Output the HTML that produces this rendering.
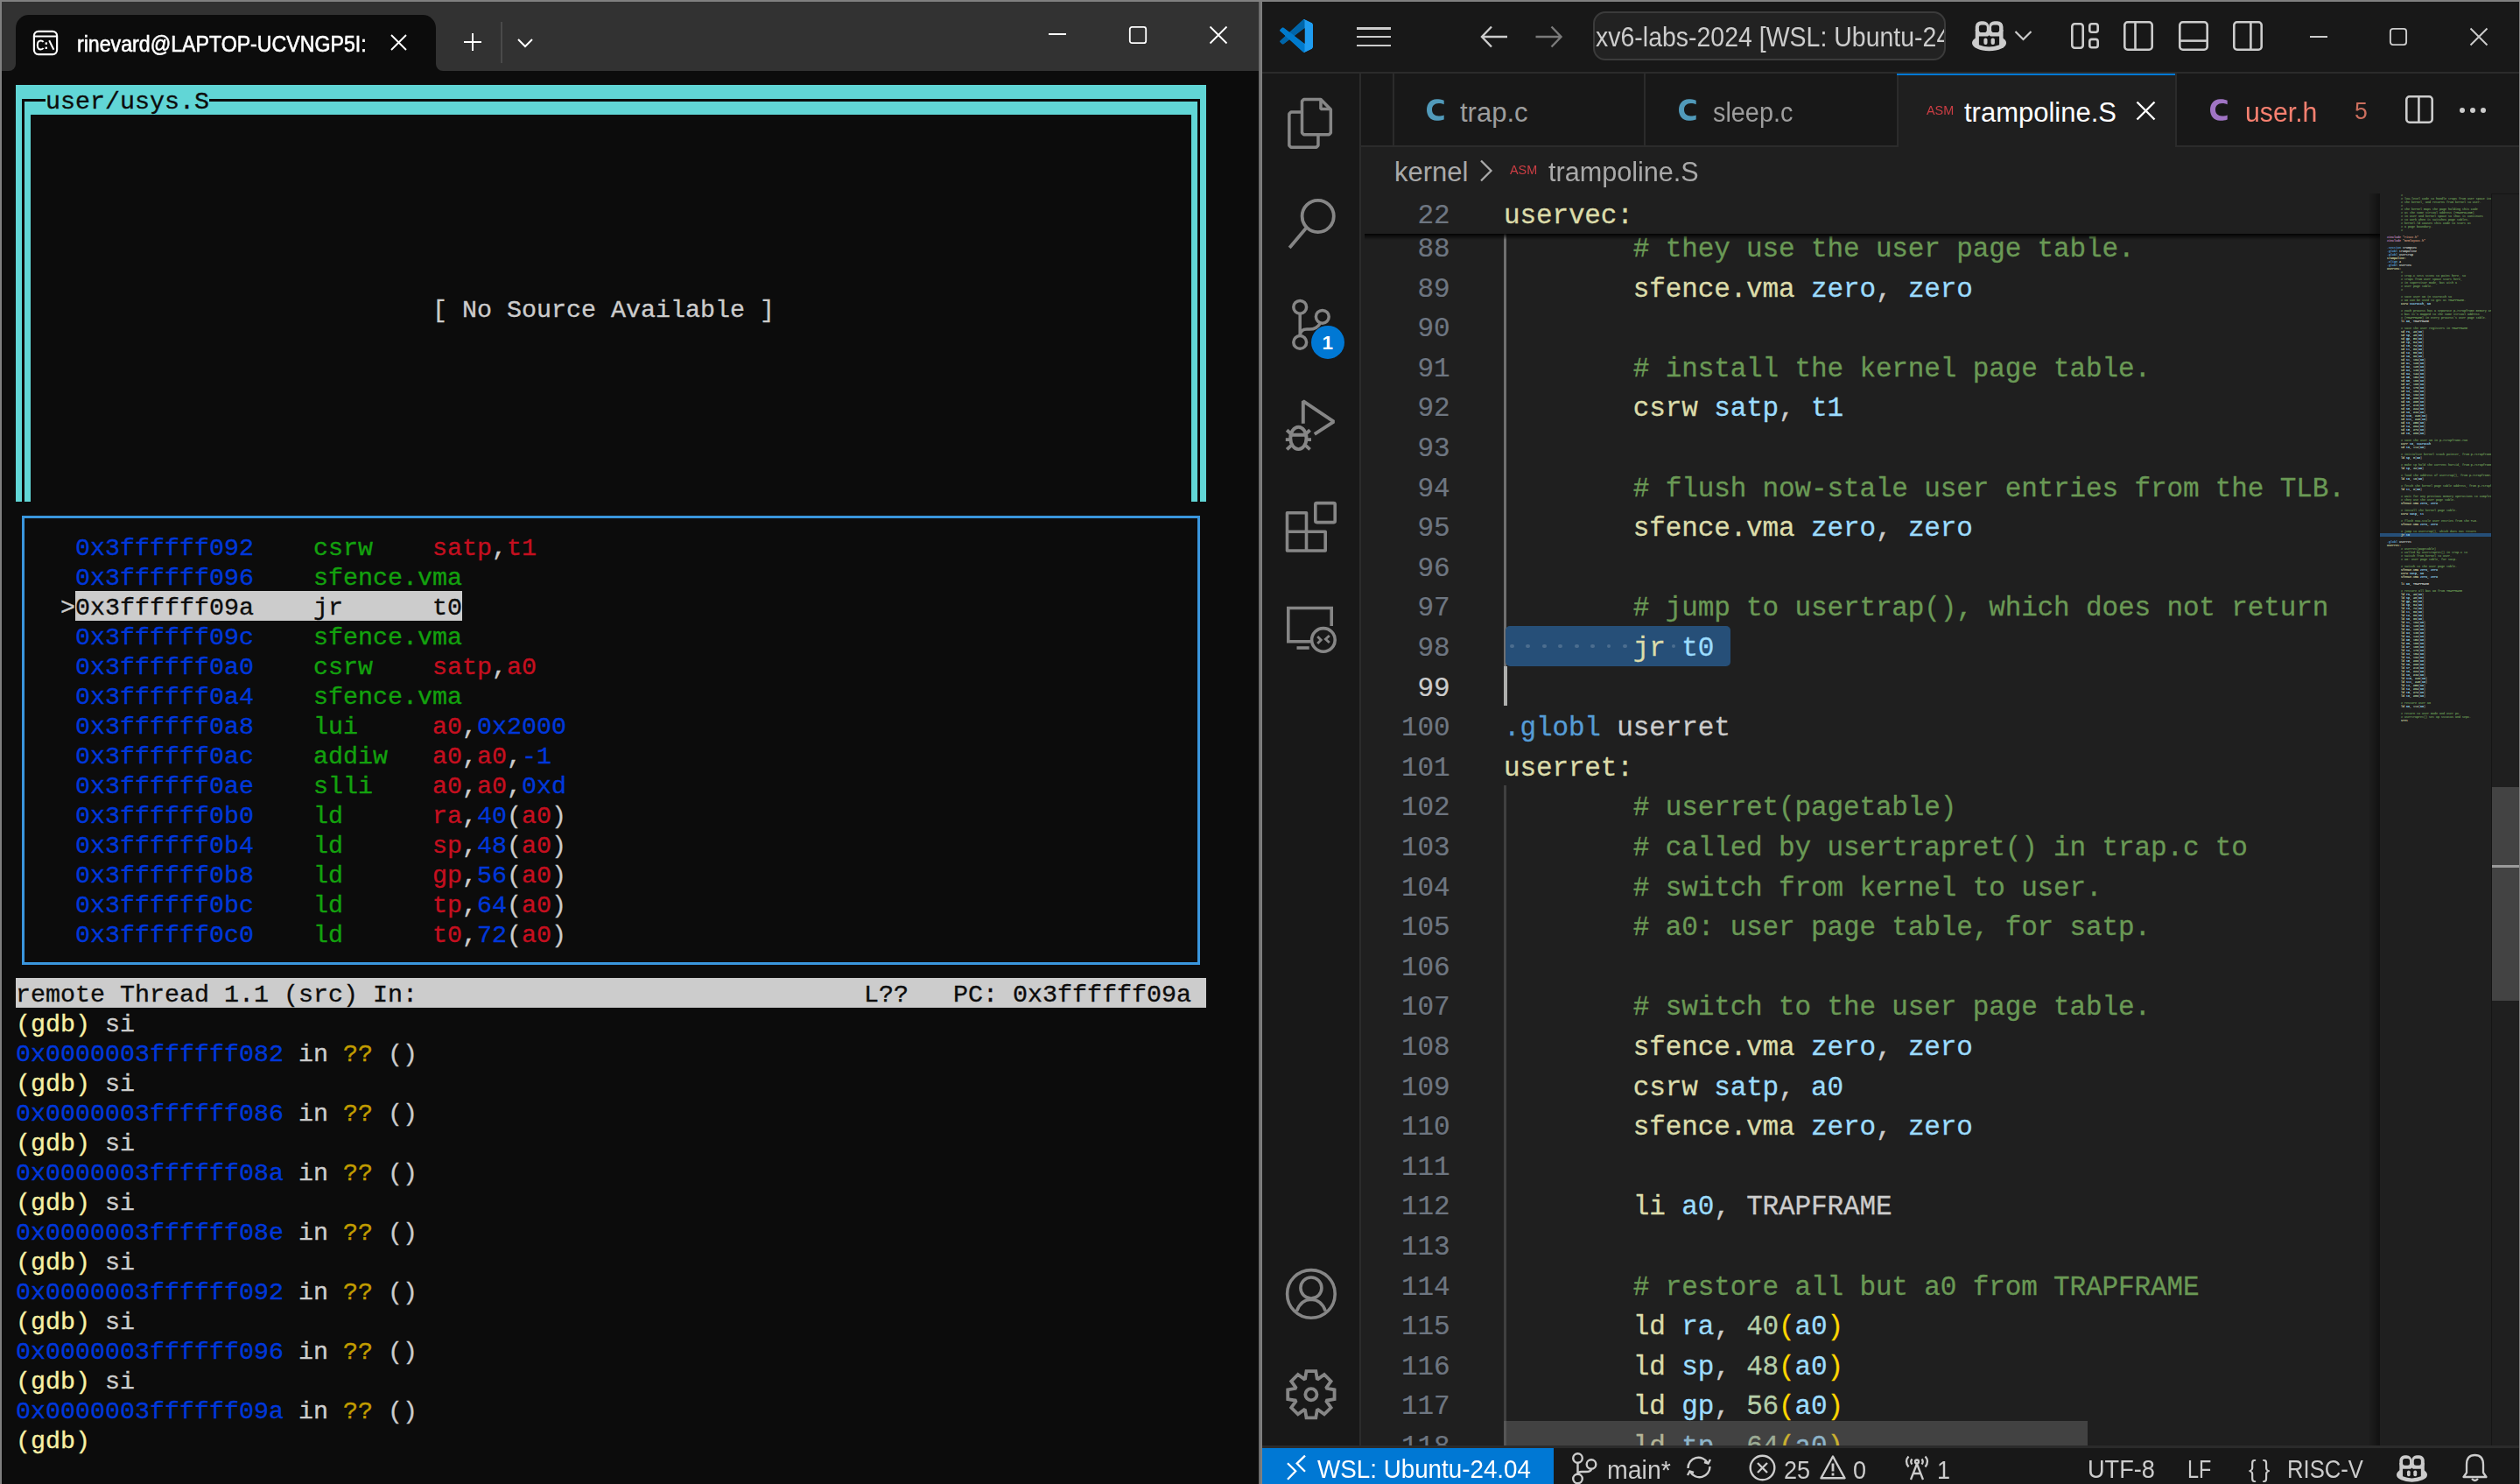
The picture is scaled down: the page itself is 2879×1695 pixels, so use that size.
<!DOCTYPE html>
<html><head><meta charset="utf-8"><title>screen</title>
<style>
html,body{margin:0;padding:0;}
body{width:2879px;height:1695px;position:relative;overflow:hidden;background:#0c0c0c;}
.t{position:absolute;left:18px;white-space:pre;font-family:"Liberation Mono",monospace;font-size:28.33px;line-height:34px;height:34px;color:#cccccc;-webkit-text-stroke:0.35px currentColor;}
.e{position:absolute;left:1718px;white-space:pre;font-family:"Liberation Mono",monospace;font-size:31px;letter-spacing:-0.13px;line-height:45.6px;height:45.6px;color:#cccccc;-webkit-text-stroke:0.3px currentColor;}
.ln{position:absolute;left:1561.5px;width:95px;text-align:right;white-space:pre;font-family:"Liberation Mono",monospace;font-size:31px;letter-spacing:-0.13px;line-height:45.6px;height:45.6px;color:#6e7681;-webkit-text-stroke:0.2px currentColor;}
</style></head><body>

<div style="position:absolute;left:0px;top:0px;width:2879px;height:2px;background:#808080;"></div>
<div style="position:absolute;left:0px;top:0px;width:2px;height:1695px;background:#808080;"></div>
<div style="position:absolute;left:1438px;top:0px;width:4px;height:1695px;background:#808080;"></div>
<div style="position:absolute;left:1438px;top:2px;width:2px;height:1693px;background:#6c6c6c;"></div>
<div style="position:absolute;left:2px;top:2px;width:1436px;height:79px;background:#323232;"></div>
<div style="position:absolute;left:18px;top:17px;width:480px;height:64px;background:#0c0c0c;border-radius:15px 15px 0 0;"></div>
<div style="position:absolute;left:10px;top:73px;width:8px;height:8px;background:#0c0c0c;"></div>
<div style="position:absolute;left:2px;top:2px;width:16px;height:79px;background:#323232;border-bottom-right-radius:8px;"></div>
<div style="position:absolute;left:498px;top:73px;width:8px;height:8px;background:#0c0c0c;"></div>
<div style="position:absolute;left:498px;top:2px;width:940px;height:79px;background:#323232;border-bottom-left-radius:8px;"></div>
<svg style="position:absolute;left:36px;top:33px;" width="32" height="32" viewBox="0 0 32 32"><rect x="2.9" y="2.9" width="26.2" height="26.2" rx="5" fill="none" stroke="#fff" stroke-width="2.2"/><line x1="3" y1="8.5" x2="29" y2="8.5" stroke="#fff" stroke-width="2"/><path d="M13.6 14.8 Q12.6 13.4 10.6 13.4 Q6.8 13.4 6.8 18.4 Q6.8 23.4 10.6 23.4 Q12.6 23.4 13.6 22" fill="none" stroke="#fff" stroke-width="2"/><rect x="15.6" y="15.4" width="2.4" height="2.4" fill="#fff"/><rect x="15.6" y="20.6" width="2.4" height="2.4" fill="#fff"/><path d="M20.2 13.2 L25.4 23.8" stroke="#fff" stroke-width="2" fill="none"/></svg>
<div style="position:absolute;left:88px;top:38px;white-space:pre;color:#ffffff;font-family:'Liberation Sans', sans-serif;font-size:25.4px;font-weight:normal;line-height:1;-webkit-text-stroke:0.6px #fff;transform:scaleX(0.912);transform-origin:0 0;">rinevard@LAPTOP-UCVNGP5I:</div>
<svg style="position:absolute;left:445px;top:38px;" width="22" height="22" viewBox="0 0 22 22"><path d="M2 2 L19 19 M19 2 L2 19" stroke="#fff" stroke-width="1.9" fill="none"/></svg>
<svg style="position:absolute;left:528px;top:36px;" width="24" height="24" viewBox="0 0 24 24"><path d="M12 2 V22 M2 12 H22" stroke="#fff" stroke-width="2" fill="none"/></svg>
<div style="position:absolute;left:572px;top:25px;width:2px;height:47px;background:#4a4a4a;"></div>
<svg style="position:absolute;left:590px;top:42px;" width="20" height="14" viewBox="0 0 20 14"><path d="M2 3 L10 11 L18 3" stroke="#fff" stroke-width="2" fill="none"/></svg>
<div style="position:absolute;left:1198px;top:38px;width:20px;height:2px;background:#ffffff;"></div>
<svg style="position:absolute;left:1288px;top:28px;" width="24" height="24" viewBox="0 0 24 24"><rect x="2.8" y="2.8" width="18.4" height="18.4" rx="2.5" fill="none" stroke="#fff" stroke-width="1.8"/></svg>
<svg style="position:absolute;left:1380px;top:28px;" width="24" height="24" viewBox="0 0 24 24"><path d="M2.5 2.5 L21.5 21.5 M21.5 2.5 L2.5 21.5" stroke="#fff" stroke-width="1.8" fill="none"/></svg>
<div style="position:absolute;left:18px;top:97px;width:1360px;height:34px;background:#61d6d6;"></div>
<div style="position:absolute;left:18px;top:131px;width:17px;height:442px;background:#61d6d6;"></div>
<div style="position:absolute;left:1361px;top:131px;width:17px;height:442px;background:#61d6d6;"></div>
<div style="position:absolute;left:25px;top:113px;width:1346px;height:3px;background:#0c0c0c;"></div>
<div style="position:absolute;left:25px;top:113px;width:3px;height:460px;background:#0c0c0c;"></div>
<div style="position:absolute;left:1368px;top:113px;width:3px;height:460px;background:#0c0c0c;"></div>
<div style="position:absolute;left:52px;top:97px;width:187px;height:34px;background:#61d6d6;"></div>
<div class="t" style="top:99.5px;left:52px"><span style="color:#0c0c0c">user/usys.S</span></div>
<div class="t" style="top:337.5px;left:494px">[ No Source Available ]</div>
<div style="position:absolute;left:25px;top:589px;width:1346px;height:3px;background:#3a96dd;"></div>
<div style="position:absolute;left:25px;top:1099px;width:1346px;height:3px;background:#3a96dd;"></div>
<div style="position:absolute;left:25px;top:589px;width:3px;height:513px;background:#3a96dd;"></div>
<div style="position:absolute;left:1368px;top:589px;width:3px;height:513px;background:#3a96dd;"></div>
<div class="t" style="top:609.5px;left:86px"><span style="color:#0037da">0x3ffffff092</span>    <span style="color:#13a10e">csrw    </span><span style="color:#c50f1f">satp</span><span style="color:#cccccc">,</span><span style="color:#c50f1f">t1</span></div>
<div class="t" style="top:643.5px;left:86px"><span style="color:#0037da">0x3ffffff096</span>    <span style="color:#13a10e">sfence.vma</span></div>
<div style="position:absolute;left:86px;top:675px;width:442px;height:34px;background:#cccccc;"></div>
<div class="t" style="top:677.5px;left:69px"><span style="color:#cccccc">&gt;</span><span style="color:#0c0c0c">0x3ffffff09a    jr      t0</span></div>
<div class="t" style="top:711.5px;left:86px"><span style="color:#0037da">0x3ffffff09c</span>    <span style="color:#13a10e">sfence.vma</span></div>
<div class="t" style="top:745.5px;left:86px"><span style="color:#0037da">0x3ffffff0a0</span>    <span style="color:#13a10e">csrw    </span><span style="color:#c50f1f">satp</span><span style="color:#cccccc">,</span><span style="color:#c50f1f">a0</span></div>
<div class="t" style="top:779.5px;left:86px"><span style="color:#0037da">0x3ffffff0a4</span>    <span style="color:#13a10e">sfence.vma</span></div>
<div class="t" style="top:813.5px;left:86px"><span style="color:#0037da">0x3ffffff0a8</span>    <span style="color:#13a10e">lui     </span><span style="color:#c50f1f">a0</span><span style="color:#cccccc">,</span><span style="color:#0037da">0x2000</span></div>
<div class="t" style="top:847.5px;left:86px"><span style="color:#0037da">0x3ffffff0ac</span>    <span style="color:#13a10e">addiw   </span><span style="color:#c50f1f">a0</span><span style="color:#cccccc">,</span><span style="color:#c50f1f">a0</span><span style="color:#cccccc">,</span><span style="color:#0037da">-1</span></div>
<div class="t" style="top:881.5px;left:86px"><span style="color:#0037da">0x3ffffff0ae</span>    <span style="color:#13a10e">slli    </span><span style="color:#c50f1f">a0</span><span style="color:#cccccc">,</span><span style="color:#c50f1f">a0</span><span style="color:#cccccc">,</span><span style="color:#0037da">0xd</span></div>
<div class="t" style="top:915.5px;left:86px"><span style="color:#0037da">0x3ffffff0b0</span>    <span style="color:#13a10e">ld      </span><span style="color:#c50f1f">ra</span><span style="color:#cccccc">,</span><span style="color:#0037da">40</span><span style="color:#cccccc">(</span><span style="color:#c50f1f">a0</span><span style="color:#cccccc">)</span></div>
<div class="t" style="top:949.5px;left:86px"><span style="color:#0037da">0x3ffffff0b4</span>    <span style="color:#13a10e">ld      </span><span style="color:#c50f1f">sp</span><span style="color:#cccccc">,</span><span style="color:#0037da">48</span><span style="color:#cccccc">(</span><span style="color:#c50f1f">a0</span><span style="color:#cccccc">)</span></div>
<div class="t" style="top:983.5px;left:86px"><span style="color:#0037da">0x3ffffff0b8</span>    <span style="color:#13a10e">ld      </span><span style="color:#c50f1f">gp</span><span style="color:#cccccc">,</span><span style="color:#0037da">56</span><span style="color:#cccccc">(</span><span style="color:#c50f1f">a0</span><span style="color:#cccccc">)</span></div>
<div class="t" style="top:1017.5px;left:86px"><span style="color:#0037da">0x3ffffff0bc</span>    <span style="color:#13a10e">ld      </span><span style="color:#c50f1f">tp</span><span style="color:#cccccc">,</span><span style="color:#0037da">64</span><span style="color:#cccccc">(</span><span style="color:#c50f1f">a0</span><span style="color:#cccccc">)</span></div>
<div class="t" style="top:1051.5px;left:86px"><span style="color:#0037da">0x3ffffff0c0</span>    <span style="color:#13a10e">ld      </span><span style="color:#c50f1f">t0</span><span style="color:#cccccc">,</span><span style="color:#0037da">72</span><span style="color:#cccccc">(</span><span style="color:#c50f1f">a0</span><span style="color:#cccccc">)</span></div>
<div style="position:absolute;left:18px;top:1117px;width:1360px;height:34px;background:#cccccc;"></div>
<div class="t" style="top:1119.5px;left:18px"><span style="color:#0c0c0c">remote Thread 1.1 (src) In:                              L??   PC: 0x3ffffff09a</span></div>
<div class="t" style="top:1153.5px;left:18px"><span style="color:#f9f1a5">(gdb)</span><span style="color:#cccccc"> si</span></div>
<div class="t" style="top:1187.5px;left:18px"><span style="color:#0037da">0x0000003ffffff082</span><span style="color:#cccccc"> in </span><span style="color:#c19c00">??</span><span style="color:#cccccc"> ()</span></div>
<div class="t" style="top:1221.5px;left:18px"><span style="color:#f9f1a5">(gdb)</span><span style="color:#cccccc"> si</span></div>
<div class="t" style="top:1255.5px;left:18px"><span style="color:#0037da">0x0000003ffffff086</span><span style="color:#cccccc"> in </span><span style="color:#c19c00">??</span><span style="color:#cccccc"> ()</span></div>
<div class="t" style="top:1289.5px;left:18px"><span style="color:#f9f1a5">(gdb)</span><span style="color:#cccccc"> si</span></div>
<div class="t" style="top:1323.5px;left:18px"><span style="color:#0037da">0x0000003ffffff08a</span><span style="color:#cccccc"> in </span><span style="color:#c19c00">??</span><span style="color:#cccccc"> ()</span></div>
<div class="t" style="top:1357.5px;left:18px"><span style="color:#f9f1a5">(gdb)</span><span style="color:#cccccc"> si</span></div>
<div class="t" style="top:1391.5px;left:18px"><span style="color:#0037da">0x0000003ffffff08e</span><span style="color:#cccccc"> in </span><span style="color:#c19c00">??</span><span style="color:#cccccc"> ()</span></div>
<div class="t" style="top:1425.5px;left:18px"><span style="color:#f9f1a5">(gdb)</span><span style="color:#cccccc"> si</span></div>
<div class="t" style="top:1459.5px;left:18px"><span style="color:#0037da">0x0000003ffffff092</span><span style="color:#cccccc"> in </span><span style="color:#c19c00">??</span><span style="color:#cccccc"> ()</span></div>
<div class="t" style="top:1493.5px;left:18px"><span style="color:#f9f1a5">(gdb)</span><span style="color:#cccccc"> si</span></div>
<div class="t" style="top:1527.5px;left:18px"><span style="color:#0037da">0x0000003ffffff096</span><span style="color:#cccccc"> in </span><span style="color:#c19c00">??</span><span style="color:#cccccc"> ()</span></div>
<div class="t" style="top:1561.5px;left:18px"><span style="color:#f9f1a5">(gdb)</span><span style="color:#cccccc"> si</span></div>
<div class="t" style="top:1595.5px;left:18px"><span style="color:#0037da">0x0000003ffffff09a</span><span style="color:#cccccc"> in </span><span style="color:#c19c00">??</span><span style="color:#cccccc"> ()</span></div>
<div class="t" style="top:1629.5px;left:18px"><span style="color:#f9f1a5">(gdb)</span></div>
<div style="position:absolute;left:1442px;top:2px;width:1437px;height:80px;background:#181818;"></div>
<div style="position:absolute;left:1442px;top:82px;width:1437px;height:2px;background:#2b2b2b;"></div>
<svg style="position:absolute;left:1462px;top:22px;" width="40" height="38" viewBox="0 0 40 38"><g transform="scale(0.38)"><defs><mask id="vm" maskUnits="userSpaceOnUse" x="0" y="0" width="100" height="100"><path fill="#fff" fill-rule="evenodd" d="M70.9119 99.3171C72.4869 99.9307 74.2828 99.8914 75.8725 99.1264L96.4608 89.2197C98.6242 88.1787 100 85.9892 100 83.5872V16.4133C100 14.0113 98.6243 11.8218 96.4609 10.7808L75.8725 0.873756C73.7862 -0.130129 71.3446 0.11576 69.5135 1.44695C69.252 1.63711 69.0028 1.84943 68.769 2.08341L29.3551 38.0415L12.1872 25.0096C10.589 23.7965 8.35363 23.8959 6.86933 25.2461L1.36303 30.2549C-0.452552 31.9064 -0.454633 34.7627 1.35853 36.417L16.2471 50.0001L1.35853 63.5832C-0.454633 65.2374 -0.452552 68.0938 1.36303 69.7453L6.86933 74.7541C8.35363 76.1043 10.589 76.2037 12.1872 74.9905L29.3551 61.9587L68.769 97.9167C69.3925 98.5406 70.1246 99.0104 70.9119 99.3171ZM75.0152 27.2989L45.1091 50.0001L75.0152 72.7012V27.2989Z"/></mask></defs>
<g mask="url(#vm)"><path d="M96.4614 10.7962L75.8569 0.875542C73.4719 -0.272773 70.6217 0.211611 68.75 2.08333L1.29858 63.5832C-0.515693 65.2373 -0.513607 68.0937 1.30308 69.7452L6.81272 74.754C8.29793 76.1042 10.5347 76.2036 12.1338 74.9905L93.3609 13.3699C96.086 11.3026 100 13.2462 100 16.6667V16.4275C100 14.0265 98.6246 11.8378 96.4614 10.7962Z" fill="#0065A9"/><path d="M96.4614 89.2038L75.8569 99.1245C73.4719 100.273 70.6217 99.7884 68.75 97.9167L1.29858 36.4169C-0.515693 34.7627 -0.513607 31.9063 1.30308 30.2548L6.81272 25.246C8.29793 23.8958 10.5347 23.7964 12.1338 25.0095L93.3609 86.6301C96.086 88.6974 100 86.7538 100 83.3334V83.5726C100 85.9735 98.6246 88.1622 96.4614 89.2038Z" fill="#007ACC"/><path d="M75.8578 99.1263C73.4721 100.274 70.6219 99.7885 68.75 97.9166C71.0564 100.223 75 98.5895 75 95.3278V4.67213C75 1.41039 71.0564 -0.223106 68.75 2.08329C70.6219 0.211402 73.4721 -0.273666 75.8578 0.873633L96.4587 10.7807C98.6234 11.8217 100 14.0112 100 16.4132V83.5871C100 85.9891 98.6234 88.1786 96.4586 89.2196L75.8578 99.1263Z" fill="#1F9CF0"/></g></g></svg>
<div style="position:absolute;left:1550px;top:31.2px;width:39px;height:2.5px;background:#cccccc;"></div>
<div style="position:absolute;left:1550px;top:40.8px;width:39px;height:2.5px;background:#cccccc;"></div>
<div style="position:absolute;left:1550px;top:50.5px;width:39px;height:2.5px;background:#cccccc;"></div>
<svg style="position:absolute;left:1688px;top:26px;" width="40" height="32" viewBox="0 0 40 32"><path d="M5 16 H34 M16 4.5 L5 16 L16 27.5" stroke="#cccccc" stroke-width="2.4" fill="none" stroke-linejoin="miter"/></svg>
<svg style="position:absolute;left:1750px;top:26px;" width="40" height="32" viewBox="0 0 40 32"><path d="M4.5 16 H33.5 M22.5 4.5 L33.5 16 L22.5 27.5" stroke="#7a7a7a" stroke-width="2.4" fill="none"/></svg>
<div style="position:absolute;left:1820px;top:13px;width:403px;height:56px;background:#222222;box-sizing:border-box;border:2px solid #3b3b3b;border-radius:14px;"></div>
<div style="position:absolute;left:1822px;top:15px;width:399px;height:52px;overflow:hidden;border-radius:12px;">
<div style="position:absolute;left:1px;top:10.91px;white-space:pre;color:#cccccc;font-family:'Liberation Sans', sans-serif;font-size:32px;line-height:32px;transform:scaleX(0.89);transform-origin:0 0;">xv6-labs-2024 [WSL: Ubuntu-24.04]</div>
</div>
<svg style="position:absolute;left:2253px;top:23.75px;" width="42" height="38" viewBox="0 0 42 38"><g transform="scale(1.0)">
<ellipse cx="19.55" cy="25" rx="19.55" ry="9.3" fill="#cccccc"/>
<rect x="3.75" y="10" width="31.75" height="15" fill="#cccccc"/>
<rect x="3.75" y="0.2" width="15.6" height="16.8" rx="6.5" fill="#cccccc"/>
<rect x="19.1" y="0.2" width="16.4" height="16.8" rx="6.5" fill="#cccccc"/>
<rect x="7.9" y="4.5" width="8.9" height="8.5" rx="2.8" fill="#181818"/>
<rect x="22.1" y="4.5" width="9" height="8.5" rx="2.8" fill="#181818"/>
<path d="M7.9 17.5 H18 L19.5 16.2 L21 17.5 H31.1 V27.2 Q19.5 32 7.9 27.2 Z" fill="#181818"/>
<rect x="13.4" y="19.5" width="4.1" height="7.5" rx="2" fill="#cccccc"/>
<rect x="21.6" y="19.5" width="4.3" height="7.5" rx="2" fill="#cccccc"/>
</g></svg>
<svg style="position:absolute;left:2300px;top:34px;" width="24" height="14" viewBox="0 0 24 14"><path d="M2.5 2 L11.5 11 L20.5 2" stroke="#cccccc" stroke-width="2.2" fill="none"/></svg>
<svg style="position:absolute;left:2362px;top:22px;" width="40" height="38" viewBox="0 0 40 38"><rect x="5.3" y="5.3" width="12.4" height="27.4" rx="3" fill="none" stroke="#cccccc" stroke-width="2.6"/><rect x="25.3" y="5.3" width="9.4" height="9.4" rx="2.5" fill="none" stroke="#cccccc" stroke-width="2.6"/><rect x="25.3" y="22.9" width="9.4" height="9.4" rx="2.5" fill="none" stroke="#cccccc" stroke-width="2.6"/></svg>
<svg style="position:absolute;left:2422px;top:20px;" width="42" height="42" viewBox="0 0 42 42"><rect x="5.3" y="5.3" width="31.4" height="31.4" rx="3.5" fill="none" stroke="#cccccc" stroke-width="2.6"/><line x1="17.5" y1="5" x2="17.5" y2="37" stroke="#cccccc" stroke-width="2.6"/></svg>
<svg style="position:absolute;left:2485px;top:20px;" width="42" height="42" viewBox="0 0 42 42"><rect x="5.3" y="5.3" width="31.4" height="31.4" rx="3.5" fill="none" stroke="#cccccc" stroke-width="2.6"/><line x1="5" y1="26.6" x2="37" y2="26.6" stroke="#cccccc" stroke-width="2.6"/></svg>
<svg style="position:absolute;left:2547px;top:20px;" width="42" height="42" viewBox="0 0 42 42"><rect x="5.3" y="5.3" width="31.4" height="31.4" rx="3.5" fill="none" stroke="#cccccc" stroke-width="2.6"/><line x1="24.4" y1="5" x2="24.4" y2="37" stroke="#cccccc" stroke-width="2.6"/></svg>
<div style="position:absolute;left:2639px;top:41px;width:20px;height:2px;background:#cccccc;"></div>
<svg style="position:absolute;left:2727px;top:29px;" width="26" height="26" viewBox="0 0 26 26"><rect x="3.9" y="3.9" width="18.2" height="18.2" rx="3" fill="none" stroke="#cccccc" stroke-width="1.9"/></svg>
<svg style="position:absolute;left:2819px;top:29px;" width="26" height="26" viewBox="0 0 26 26"><path d="M3.5 3.5 L22.5 22.5 M22.5 3.5 L3.5 22.5" stroke="#cccccc" stroke-width="1.9" fill="none"/></svg>
<div style="position:absolute;left:1442px;top:84px;width:111px;height:1567px;background:#181818;"></div>
<div style="position:absolute;left:1553px;top:84px;width:2px;height:1567px;background:#2b2b2b;"></div>
<svg style="position:absolute;left:1466px;top:107px;" width="62" height="68" viewBox="0 0 62 68"><g fill="none" stroke="#868686" stroke-width="3.5" stroke-linejoin="bevel">
<path d="M23.5 6.55 H42.95 L54.35 17.95 V44.75 L52.35 46.75 H23.5 L21.5 44.75 V8.55 Z"/>
<path d="M42.95 6.8 V17.45 H54.1"/>
<path d="M21.5 20.95 H8.85 L6.85 22.95 V59.15 L8.85 61.15 H37.95 L39.95 59.15 V46.75"/>
</g></svg>
<svg style="position:absolute;left:1462px;top:220px;" width="70" height="70" viewBox="0 0 70 70"><circle cx="43.7" cy="26.95" r="18.1" fill="none" stroke="#868686" stroke-width="3.8"/><path d="M30.2 40.6 L11.2 63" stroke="#868686" stroke-width="3.8"/></svg>
<svg style="position:absolute;left:1462px;top:330px;" width="70" height="80" viewBox="0 0 70 80"><g fill="none" stroke="#868686" stroke-width="3.5">
<circle cx="23.2" cy="20.8" r="7.4"/><circle cx="48.8" cy="31.8" r="7.4"/><circle cx="23.2" cy="60.9" r="7.4"/>
<path d="M23.2 28.2 V53.5"/><path d="M46.5 38.8 Q42.5 46.1 34 46.1 H31 Q24 46.1 23.2 53"/></g></svg>
<svg style="position:absolute;left:1496px;top:370px;" width="42" height="42" viewBox="0 0 42 42"><circle cx="21" cy="20.9" r="19" fill="#0078d4"/></svg>
<div style="position:absolute;left:1510.5px;top:380.95px;white-space:pre;color:#ffffff;font-family:'Liberation Sans', sans-serif;font-size:22.5px;font-weight:bold;line-height:22.5px;">1</div>
<svg style="position:absolute;left:1462px;top:445px;" width="70" height="80" viewBox="0 0 70 80"><g fill="none" stroke="#868686" stroke-width="3.9" stroke-linejoin="miter">
<path d="M26.8 38.8 V13.2 L61.8 36.7 L39.8 50.8" stroke-linejoin="bevel"/>
<ellipse cx="21.4" cy="55.4" rx="9.1" ry="12.7"/>
<path d="M12.3 51.8 H30.5 M8.2 46.2 L13.4 51 M34.6 46.2 L29.4 51 M6.8 57.1 H12.5 M36 57.1 H30.3 M8.2 68.4 L13.6 63.4 M34.6 68.4 L29.2 63.4"/>
</g></svg>
<svg style="position:absolute;left:1462px;top:565px;" width="70" height="70" viewBox="0 0 70 70"><g fill="none" stroke="#868686" stroke-width="3.6" stroke-linejoin="round">
<path d="M8.5 20.8 H30.5 V42.2 H52.2 V64 H8.5 Z"/>
<path d="M30.5 42.2 V64 M8.5 42.2 H30.5"/>
<rect x="40.8" y="9.6" width="22.4" height="22" rx="1.5"/>
</g></svg>
<svg style="position:absolute;left:1462px;top:685px;" width="70" height="70" viewBox="0 0 70 70"><g fill="none" stroke="#868686" stroke-width="3.6">
<path d="M59.2 30 V9.5 H9.8 V47.7 H35"/>
<path d="M19.5 55 H33.7"/>
<circle cx="49.9" cy="45.9" r="13.3"/>
<path d="M43.2 42 L47.2 46 L43.2 50 M56.8 41 L52.4 45 L56.8 49" stroke-width="2.8"/>
</g></svg>
<svg style="position:absolute;left:1462px;top:1442px;" width="72" height="72" viewBox="0 0 72 72"><g fill="none" stroke="#868686" stroke-width="3.6">
<circle cx="35.9" cy="35.9" r="27.3"/>
<circle cx="35.9" cy="29" r="12"/>
<path d="M19.5 55.5 Q24 42.5 35.9 42.2 Q47.8 42.5 52.3 55.5"/>
</g></svg>
<svg style="position:absolute;left:1462px;top:1557px;" width="72" height="72" viewBox="0 0 72 72"><path d="M29.10 17.64 L30.50 9.04 L41.30 9.04 L42.70 17.64 L43.86 18.12 L50.93 13.03 L58.57 20.67 L53.48 27.74 L53.96 28.90 L62.56 30.30 L62.56 41.10 L53.96 42.50 L53.48 43.66 L58.57 50.73 L50.93 58.37 L43.86 53.28 L42.70 53.76 L41.30 62.36 L30.50 62.36 L29.10 53.76 L27.94 53.28 L20.87 58.37 L13.23 50.73 L18.32 43.66 L17.84 42.50 L9.24 41.10 L9.24 30.30 L17.84 28.90 L18.32 27.74 L13.23 20.67 L20.87 13.03 L27.94 18.12 Z" fill="none" stroke="#868686" stroke-width="3.8" stroke-linejoin="miter"/><circle cx="35.9" cy="35.7" r="6.6" fill="none" stroke="#868686" stroke-width="3.8"/></svg>
<div style="position:absolute;left:1555px;top:84px;width:1324px;height:84px;background:#181818;"></div>
<div style="position:absolute;left:1555px;top:166px;width:1324px;height:2px;background:#2b2b2b;"></div>
<div style="position:absolute;left:1591px;top:84px;width:2px;height:82px;background:#2b2b2b;"></div>
<div style="position:absolute;left:1878px;top:84px;width:2px;height:82px;background:#2b2b2b;"></div>
<div style="position:absolute;left:2167px;top:84px;width:2px;height:82px;background:#2b2b2b;"></div>
<div style="position:absolute;left:2485px;top:84px;width:2px;height:82px;background:#2b2b2b;"></div>
<div style="position:absolute;left:2169px;top:84px;width:316px;height:84px;background:#1f1f1f;"></div>
<div style="position:absolute;left:2167px;top:84px;width:318px;height:2px;background:#0078d4;"></div>
<svg style="position:absolute;left:1626px;top:109px;" width="28" height="32" viewBox="0 0 28 32"><g transform="translate(-1626,-109)"><path d="M1649.7 114.7 C1647 113.5 1644 113.3 1641 113.3 C1634.5 113.3 1630 118.5 1630 125.5 C1630 132.5 1634.5 137.8 1641 137.8 C1644.5 137.8 1647.5 137.2 1649.7 136.4 V131.4 C1648 132.2 1646 132.5 1643.5 132.5 C1639 132.5 1636 129.5 1636 125.3 C1636 121 1639 118 1643.5 118 C1646 118 1648 118.5 1649.7 119.2 Z" fill="#519aba"/></g></svg>
<div style="position:absolute;left:1668px;top:112.76px;white-space:pre;color:#9d9d9d;font-family:'Liberation Sans', sans-serif;font-size:31px;font-weight:normal;line-height:31px;">trap.c</div>
<svg style="position:absolute;left:1914px;top:109px;" width="28" height="32" viewBox="0 0 28 32"><g transform="translate(-1626,-109)"><path d="M1649.7 114.7 C1647 113.5 1644 113.3 1641 113.3 C1634.5 113.3 1630 118.5 1630 125.5 C1630 132.5 1634.5 137.8 1641 137.8 C1644.5 137.8 1647.5 137.2 1649.7 136.4 V131.4 C1648 132.2 1646 132.5 1643.5 132.5 C1639 132.5 1636 129.5 1636 125.3 C1636 121 1639 118 1643.5 118 C1646 118 1648 118.5 1649.7 119.2 Z" fill="#519aba"/></g></svg>
<div style="position:absolute;left:1957px;top:112.76px;white-space:pre;color:#9d9d9d;font-family:'Liberation Sans', sans-serif;font-size:31px;font-weight:normal;line-height:31px;transform:scaleX(0.93);transform-origin:0 0;">sleep.c</div>
<div style="position:absolute;left:2201px;top:118.38px;white-space:pre;color:#cc3e44;font-family:'Liberation Sans', sans-serif;font-size:15.5px;font-weight:normal;line-height:15.5px;transform:scaleX(0.93);transform-origin:0 0;">ASM</div>
<div style="position:absolute;left:2244px;top:112.76px;white-space:pre;color:#ffffff;font-family:'Liberation Sans', sans-serif;font-size:31px;font-weight:normal;line-height:31px;">trampoline.S</div>
<svg style="position:absolute;left:2438px;top:113px;" width="28" height="28" viewBox="0 0 28 28"><path d="M3.5 3.5 L23.5 23.5 M23.5 3.5 L3.5 23.5" stroke="#ffffff" stroke-width="2.4" fill="none"/></svg>
<svg style="position:absolute;left:2521px;top:109px;" width="28" height="32" viewBox="0 0 28 32"><g transform="translate(-1626,-109)"><path d="M1649.7 114.7 C1647 113.5 1644 113.3 1641 113.3 C1634.5 113.3 1630 118.5 1630 125.5 C1630 132.5 1634.5 137.8 1641 137.8 C1644.5 137.8 1647.5 137.2 1649.7 136.4 V131.4 C1648 132.2 1646 132.5 1643.5 132.5 C1639 132.5 1636 129.5 1636 125.3 C1636 121 1639 118 1643.5 118 C1646 118 1648 118.5 1649.7 119.2 Z" fill="#a074c4"/></g></svg>
<div style="position:absolute;left:2565px;top:112.76px;white-space:pre;color:#f88070;font-family:'Liberation Sans', sans-serif;font-size:31px;font-weight:normal;line-height:31px;transform:scaleX(0.975);transform-origin:0 0;">user.h</div>
<div style="position:absolute;left:2690px;top:113.30px;white-space:pre;color:#cc6f5e;font-family:'Liberation Sans', sans-serif;font-size:28px;font-weight:normal;line-height:28px;transform:scaleX(0.95);transform-origin:0 0;">5</div>
<svg style="position:absolute;left:2744px;top:105px;" width="40" height="40" viewBox="0 0 40 40"><rect x="5.3" y="5.3" width="29.4" height="29.4" rx="3.5" fill="none" stroke="#cccccc" stroke-width="2.6"/><line x1="19.4" y1="5" x2="19.4" y2="35" stroke="#cccccc" stroke-width="2.6"/></svg>
<div style="position:absolute;left:2809.8px;top:122.8px;width:6.4px;height:6.4px;background:#cccccc;border-radius:50%;"></div>
<div style="position:absolute;left:2821.6000000000004px;top:122.8px;width:6.4px;height:6.4px;background:#cccccc;border-radius:50%;"></div>
<div style="position:absolute;left:2833.5px;top:122.8px;width:6.4px;height:6.4px;background:#cccccc;border-radius:50%;"></div>
<div style="position:absolute;left:1555px;top:168px;width:1324px;height:53px;background:#1f1f1f;"></div>
<div style="position:absolute;left:1593px;top:180.76px;white-space:pre;color:#a9a9a9;font-family:'Liberation Sans', sans-serif;font-size:31px;font-weight:normal;line-height:31px;">kernel</div>
<svg style="position:absolute;left:1688px;top:180px;" width="20" height="30" viewBox="0 0 20 30"><path d="M4 3.5 L15.5 15 L4 26.5" stroke="#a9a9a9" stroke-width="2.3" fill="none"/></svg>
<div style="position:absolute;left:1725px;top:185.88px;white-space:pre;color:#cc3e44;font-family:'Liberation Sans', sans-serif;font-size:15.5px;font-weight:normal;line-height:15.5px;transform:scaleX(0.93);transform-origin:0 0;">ASM</div>
<div style="position:absolute;left:1769px;top:180.76px;white-space:pre;color:#a9a9a9;font-family:'Liberation Sans', sans-serif;font-size:31px;font-weight:normal;line-height:31px;transform:scaleX(0.987);transform-origin:0 0;">trampoline.S</div>
<div style="position:absolute;left:1555px;top:221px;width:1324px;height:1430px;background:#1f1f1f;"></div>
<div style="position:absolute;left:1718px;top:259.0px;width:2.6px;height:547.2px;background:#707070;"></div>
<div style="position:absolute;left:1718px;top:897.4px;width:2.6px;height:753.6px;background:#404040;"></div>
<div style="position:absolute;left:1719.6px;top:715.0px;width:257.20000000000005px;height:45.6px;background:#264f78;border-radius:5px;"></div>
<div style="position:absolute;left:1724.8349999999998px;top:735.5px;width:4.8px;height:4.8px;background:#4c6d8f;border-radius:50%;"></div>
<div style="position:absolute;left:1743.3049999999998px;top:735.5px;width:4.8px;height:4.8px;background:#4c6d8f;border-radius:50%;"></div>
<div style="position:absolute;left:1761.7749999999999px;top:735.5px;width:4.8px;height:4.8px;background:#4c6d8f;border-radius:50%;"></div>
<div style="position:absolute;left:1780.245px;top:735.5px;width:4.8px;height:4.8px;background:#4c6d8f;border-radius:50%;"></div>
<div style="position:absolute;left:1798.715px;top:735.5px;width:4.8px;height:4.8px;background:#4c6d8f;border-radius:50%;"></div>
<div style="position:absolute;left:1817.185px;top:735.5px;width:4.8px;height:4.8px;background:#4c6d8f;border-radius:50%;"></div>
<div style="position:absolute;left:1835.655px;top:735.5px;width:4.8px;height:4.8px;background:#4c6d8f;border-radius:50%;"></div>
<div style="position:absolute;left:1854.125px;top:735.5px;width:4.8px;height:4.8px;background:#4c6d8f;border-radius:50%;"></div>
<div style="position:absolute;left:1909.5349999999999px;top:735.5px;width:4.8px;height:4.8px;background:#4c6d8f;border-radius:50%;"></div>
<div class="ln" style="top:262.00px;color:#6e7681">88</div>
<div class="e" style="top:262.00px"><span style="color:#cccccc">        </span><span style="color:#6a9955"># they use the user page table.</span></div>
<div class="ln" style="top:307.60px;color:#6e7681">89</div>
<div class="e" style="top:307.60px"><span style="color:#cccccc">        </span><span style="color:#dcdcaa">sfence.vma</span><span style="color:#cccccc"> </span><span style="color:#9cdcfe">zero</span><span style="color:#cccccc">, </span><span style="color:#9cdcfe">zero</span></div>
<div class="ln" style="top:353.20px;color:#6e7681">90</div>
<div class="ln" style="top:398.80px;color:#6e7681">91</div>
<div class="e" style="top:398.80px"><span style="color:#cccccc">        </span><span style="color:#6a9955"># install the kernel page table.</span></div>
<div class="ln" style="top:444.40px;color:#6e7681">92</div>
<div class="e" style="top:444.40px"><span style="color:#cccccc">        </span><span style="color:#dcdcaa">csrw</span><span style="color:#cccccc"> </span><span style="color:#9cdcfe">satp</span><span style="color:#cccccc">, </span><span style="color:#9cdcfe">t1</span></div>
<div class="ln" style="top:490.00px;color:#6e7681">93</div>
<div class="ln" style="top:535.60px;color:#6e7681">94</div>
<div class="e" style="top:535.60px"><span style="color:#cccccc">        </span><span style="color:#6a9955"># flush now-stale user entries from the TLB.</span></div>
<div class="ln" style="top:581.20px;color:#6e7681">95</div>
<div class="e" style="top:581.20px"><span style="color:#cccccc">        </span><span style="color:#dcdcaa">sfence.vma</span><span style="color:#cccccc"> </span><span style="color:#9cdcfe">zero</span><span style="color:#cccccc">, </span><span style="color:#9cdcfe">zero</span></div>
<div class="ln" style="top:626.80px;color:#6e7681">96</div>
<div class="ln" style="top:672.40px;color:#6e7681">97</div>
<div class="e" style="top:672.40px"><span style="color:#cccccc">        </span><span style="color:#6a9955"># jump to usertrap(), which does not return</span></div>
<div class="ln" style="top:718.00px;color:#6e7681">98</div>
<div class="ln" style="top:763.60px;color:#cccccc">99</div>
<div class="ln" style="top:809.20px;color:#6e7681">100</div>
<div class="e" style="top:809.20px"><span style="color:#569cd6">.globl</span><span style="color:#cccccc"> userret</span></div>
<div class="ln" style="top:854.80px;color:#6e7681">101</div>
<div class="e" style="top:854.80px"><span style="color:#dcdcaa">userret:</span></div>
<div class="ln" style="top:900.40px;color:#6e7681">102</div>
<div class="e" style="top:900.40px"><span style="color:#cccccc">        </span><span style="color:#6a9955"># userret(pagetable)</span></div>
<div class="ln" style="top:946.00px;color:#6e7681">103</div>
<div class="e" style="top:946.00px"><span style="color:#cccccc">        </span><span style="color:#6a9955"># called by usertrapret() in trap.c to</span></div>
<div class="ln" style="top:991.60px;color:#6e7681">104</div>
<div class="e" style="top:991.60px"><span style="color:#cccccc">        </span><span style="color:#6a9955"># switch from kernel to user.</span></div>
<div class="ln" style="top:1037.20px;color:#6e7681">105</div>
<div class="e" style="top:1037.20px"><span style="color:#cccccc">        </span><span style="color:#6a9955"># a0: user page table, for satp.</span></div>
<div class="ln" style="top:1082.80px;color:#6e7681">106</div>
<div class="ln" style="top:1128.40px;color:#6e7681">107</div>
<div class="e" style="top:1128.40px"><span style="color:#cccccc">        </span><span style="color:#6a9955"># switch to the user page table.</span></div>
<div class="ln" style="top:1174.00px;color:#6e7681">108</div>
<div class="e" style="top:1174.00px"><span style="color:#cccccc">        </span><span style="color:#dcdcaa">sfence.vma</span><span style="color:#cccccc"> </span><span style="color:#9cdcfe">zero</span><span style="color:#cccccc">, </span><span style="color:#9cdcfe">zero</span></div>
<div class="ln" style="top:1219.60px;color:#6e7681">109</div>
<div class="e" style="top:1219.60px"><span style="color:#cccccc">        </span><span style="color:#dcdcaa">csrw</span><span style="color:#cccccc"> </span><span style="color:#9cdcfe">satp</span><span style="color:#cccccc">, </span><span style="color:#9cdcfe">a0</span></div>
<div class="ln" style="top:1265.20px;color:#6e7681">110</div>
<div class="e" style="top:1265.20px"><span style="color:#cccccc">        </span><span style="color:#dcdcaa">sfence.vma</span><span style="color:#cccccc"> </span><span style="color:#9cdcfe">zero</span><span style="color:#cccccc">, </span><span style="color:#9cdcfe">zero</span></div>
<div class="ln" style="top:1310.80px;color:#6e7681">111</div>
<div class="ln" style="top:1356.40px;color:#6e7681">112</div>
<div class="e" style="top:1356.40px"><span style="color:#cccccc">        </span><span style="color:#dcdcaa">li</span><span style="color:#cccccc"> </span><span style="color:#9cdcfe">a0</span><span style="color:#cccccc">, </span><span style="color:#cccccc">TRAPFRAME</span></div>
<div class="ln" style="top:1402.00px;color:#6e7681">113</div>
<div class="ln" style="top:1447.60px;color:#6e7681">114</div>
<div class="e" style="top:1447.60px"><span style="color:#cccccc">        </span><span style="color:#6a9955"># restore all but a0 from TRAPFRAME</span></div>
<div class="ln" style="top:1493.20px;color:#6e7681">115</div>
<div class="e" style="top:1493.20px"><span style="color:#cccccc">        </span><span style="color:#dcdcaa">ld</span><span style="color:#cccccc"> </span><span style="color:#9cdcfe">ra</span><span style="color:#cccccc">, </span><span style="color:#b5cea8">40</span><span style="color:#ffd700">(</span><span style="color:#9cdcfe">a0</span><span style="color:#ffd700">)</span></div>
<div class="ln" style="top:1538.80px;color:#6e7681">116</div>
<div class="e" style="top:1538.80px"><span style="color:#cccccc">        </span><span style="color:#dcdcaa">ld</span><span style="color:#cccccc"> </span><span style="color:#9cdcfe">sp</span><span style="color:#cccccc">, </span><span style="color:#b5cea8">48</span><span style="color:#ffd700">(</span><span style="color:#9cdcfe">a0</span><span style="color:#ffd700">)</span></div>
<div class="ln" style="top:1584.40px;color:#6e7681">117</div>
<div class="e" style="top:1584.40px"><span style="color:#cccccc">        </span><span style="color:#dcdcaa">ld</span><span style="color:#cccccc"> </span><span style="color:#9cdcfe">gp</span><span style="color:#cccccc">, </span><span style="color:#b5cea8">56</span><span style="color:#ffd700">(</span><span style="color:#9cdcfe">a0</span><span style="color:#ffd700">)</span></div>
<div class="ln" style="top:1630.00px;color:#6e7681">118</div>
<div class="e" style="top:1630.00px"><span style="color:#cccccc">        </span><span style="color:#dcdcaa">ld</span><span style="color:#cccccc"> </span><span style="color:#9cdcfe">tp</span><span style="color:#cccccc">, </span><span style="color:#b5cea8">64</span><span style="color:#ffd700">(</span><span style="color:#9cdcfe">a0</span><span style="color:#ffd700">)</span></div>
<div class="e" style="top:718.00px"><span style="color:#cccccc">        </span><span style="color:#dcdcaa">jr</span><span style="color:#cccccc"> </span><span style="color:#9cdcfe">t0</span></div>
<div style="position:absolute;left:1718px;top:760.6px;width:4px;height:45.6px;background:#aeafad;"></div>
<div style="position:absolute;left:2719px;top:221px;width:127px;height:1430px;background:#1f1f1f;"></div>
<div style="position:absolute;left:2719px;top:221px;width:127px;height:1430px;overflow:hidden;"><div style="position:absolute;left:-2719px;top:-221px;"><div style="position:absolute;left:2719px;top:609px;width:127px;height:4px;background:#264f78"></div>
<div style="position:absolute;left:2727px;top:220.7px;height:4px;line-height:4px;font-family:'Liberation Mono',monospace;font-size:3.34px;font-weight:bold;white-space:pre;">        <span style="color:#6a9955">#</span></div>
<div style="position:absolute;left:2727px;top:224.7px;height:4px;line-height:4px;font-family:'Liberation Mono',monospace;font-size:3.34px;font-weight:bold;white-space:pre;">        <span style="color:#6a9955"># low-level code to handle traps from user space into</span></div>
<div style="position:absolute;left:2727px;top:228.7px;height:4px;line-height:4px;font-family:'Liberation Mono',monospace;font-size:3.34px;font-weight:bold;white-space:pre;">        <span style="color:#6a9955"># the kernel, and returns from kernel to user.</span></div>
<div style="position:absolute;left:2727px;top:232.7px;height:4px;line-height:4px;font-family:'Liberation Mono',monospace;font-size:3.34px;font-weight:bold;white-space:pre;">        <span style="color:#6a9955">#</span></div>
<div style="position:absolute;left:2727px;top:236.7px;height:4px;line-height:4px;font-family:'Liberation Mono',monospace;font-size:3.34px;font-weight:bold;white-space:pre;">        <span style="color:#6a9955"># the kernel maps the page holding this code</span></div>
<div style="position:absolute;left:2727px;top:240.7px;height:4px;line-height:4px;font-family:'Liberation Mono',monospace;font-size:3.34px;font-weight:bold;white-space:pre;">        <span style="color:#6a9955"># at the same virtual address (TRAMPOLINE)</span></div>
<div style="position:absolute;left:2727px;top:244.7px;height:4px;line-height:4px;font-family:'Liberation Mono',monospace;font-size:3.34px;font-weight:bold;white-space:pre;">        <span style="color:#6a9955"># in user and kernel space so that it continues</span></div>
<div style="position:absolute;left:2727px;top:248.7px;height:4px;line-height:4px;font-family:'Liberation Mono',monospace;font-size:3.34px;font-weight:bold;white-space:pre;">        <span style="color:#6a9955"># to work when it switches page tables.</span></div>
<div style="position:absolute;left:2727px;top:252.7px;height:4px;line-height:4px;font-family:'Liberation Mono',monospace;font-size:3.34px;font-weight:bold;white-space:pre;">        <span style="color:#6a9955"># kernel.ld causes this code to start at</span></div>
<div style="position:absolute;left:2727px;top:256.7px;height:4px;line-height:4px;font-family:'Liberation Mono',monospace;font-size:3.34px;font-weight:bold;white-space:pre;">        <span style="color:#6a9955"># a page boundary.</span></div>
<div style="position:absolute;left:2727px;top:260.7px;height:4px;line-height:4px;font-family:'Liberation Mono',monospace;font-size:3.34px;font-weight:bold;white-space:pre;">        <span style="color:#6a9955">#</span></div>
<div style="position:absolute;left:2727px;top:268.7px;height:4px;line-height:4px;font-family:'Liberation Mono',monospace;font-size:3.34px;font-weight:bold;white-space:pre;"><span style="color:#c586c0">#include</span><span style="color:#ce9178"> "riscv.h"</span></div>
<div style="position:absolute;left:2727px;top:272.7px;height:4px;line-height:4px;font-family:'Liberation Mono',monospace;font-size:3.34px;font-weight:bold;white-space:pre;"><span style="color:#c586c0">#include</span><span style="color:#ce9178"> "memlayout.h"</span></div>
<div style="position:absolute;left:2727px;top:280.7px;height:4px;line-height:4px;font-family:'Liberation Mono',monospace;font-size:3.34px;font-weight:bold;white-space:pre;"><span style="color:#569cd6">.section</span><span style="color:#cccccc"> trampsec</span></div>
<div style="position:absolute;left:2727px;top:284.7px;height:4px;line-height:4px;font-family:'Liberation Mono',monospace;font-size:3.34px;font-weight:bold;white-space:pre;"><span style="color:#569cd6">.globl</span><span style="color:#cccccc"> trampoline</span></div>
<div style="position:absolute;left:2727px;top:288.7px;height:4px;line-height:4px;font-family:'Liberation Mono',monospace;font-size:3.34px;font-weight:bold;white-space:pre;"><span style="color:#569cd6">.globl</span><span style="color:#cccccc"> usertrap</span></div>
<div style="position:absolute;left:2727px;top:292.7px;height:4px;line-height:4px;font-family:'Liberation Mono',monospace;font-size:3.34px;font-weight:bold;white-space:pre;"><span style="color:#dcdcaa">trampoline:</span></div>
<div style="position:absolute;left:2727px;top:296.7px;height:4px;line-height:4px;font-family:'Liberation Mono',monospace;font-size:3.34px;font-weight:bold;white-space:pre;"><span style="color:#569cd6">.align</span><span style="color:#cccccc"> 4</span></div>
<div style="position:absolute;left:2727px;top:300.7px;height:4px;line-height:4px;font-family:'Liberation Mono',monospace;font-size:3.34px;font-weight:bold;white-space:pre;"><span style="color:#569cd6">.globl</span><span style="color:#cccccc"> uservec</span></div>
<div style="position:absolute;left:2727px;top:304.7px;height:4px;line-height:4px;font-family:'Liberation Mono',monospace;font-size:3.34px;font-weight:bold;white-space:pre;"><span style="color:#dcdcaa">uservec:</span></div>
<div style="position:absolute;left:2727px;top:308.7px;height:4px;line-height:4px;font-family:'Liberation Mono',monospace;font-size:3.34px;font-weight:bold;white-space:pre;">        <span style="color:#6a9955">#</span></div>
<div style="position:absolute;left:2727px;top:312.7px;height:4px;line-height:4px;font-family:'Liberation Mono',monospace;font-size:3.34px;font-weight:bold;white-space:pre;">        <span style="color:#6a9955"># trap.c sets stvec to point here, so</span></div>
<div style="position:absolute;left:2727px;top:316.7px;height:4px;line-height:4px;font-family:'Liberation Mono',monospace;font-size:3.34px;font-weight:bold;white-space:pre;">        <span style="color:#6a9955"># traps from user space start here,</span></div>
<div style="position:absolute;left:2727px;top:320.7px;height:4px;line-height:4px;font-family:'Liberation Mono',monospace;font-size:3.34px;font-weight:bold;white-space:pre;">        <span style="color:#6a9955"># in supervisor mode, but with a</span></div>
<div style="position:absolute;left:2727px;top:324.7px;height:4px;line-height:4px;font-family:'Liberation Mono',monospace;font-size:3.34px;font-weight:bold;white-space:pre;">        <span style="color:#6a9955"># user page table.</span></div>
<div style="position:absolute;left:2727px;top:328.7px;height:4px;line-height:4px;font-family:'Liberation Mono',monospace;font-size:3.34px;font-weight:bold;white-space:pre;">        <span style="color:#6a9955">#</span></div>
<div style="position:absolute;left:2727px;top:336.7px;height:4px;line-height:4px;font-family:'Liberation Mono',monospace;font-size:3.34px;font-weight:bold;white-space:pre;">        <span style="color:#6a9955"># save user a0 in sscratch so</span></div>
<div style="position:absolute;left:2727px;top:340.7px;height:4px;line-height:4px;font-family:'Liberation Mono',monospace;font-size:3.34px;font-weight:bold;white-space:pre;">        <span style="color:#6a9955"># a0 can be used to get at TRAPFRAME.</span></div>
<div style="position:absolute;left:2727px;top:344.7px;height:4px;line-height:4px;font-family:'Liberation Mono',monospace;font-size:3.34px;font-weight:bold;white-space:pre;">        <span style="color:#dcdcaa">csrw</span> <span style="color:#9cdcfe">sscratch</span><span style="color:#cccccc">, </span><span style="color:#9cdcfe">a0</span></div>
<div style="position:absolute;left:2727px;top:352.7px;height:4px;line-height:4px;font-family:'Liberation Mono',monospace;font-size:3.34px;font-weight:bold;white-space:pre;">        <span style="color:#6a9955"># each process has a separate p-&gt;trapframe memory area,</span></div>
<div style="position:absolute;left:2727px;top:356.7px;height:4px;line-height:4px;font-family:'Liberation Mono',monospace;font-size:3.34px;font-weight:bold;white-space:pre;">        <span style="color:#6a9955"># but it's mapped to the same virtual address</span></div>
<div style="position:absolute;left:2727px;top:360.7px;height:4px;line-height:4px;font-family:'Liberation Mono',monospace;font-size:3.34px;font-weight:bold;white-space:pre;">        <span style="color:#6a9955"># (TRAPFRAME) in every process's user page table.</span></div>
<div style="position:absolute;left:2727px;top:364.7px;height:4px;line-height:4px;font-family:'Liberation Mono',monospace;font-size:3.34px;font-weight:bold;white-space:pre;">        <span style="color:#dcdcaa">li</span> <span style="color:#9cdcfe">a0</span><span style="color:#cccccc">, </span><span style="color:#cccccc">TRAPFRAME</span></div>
<div style="position:absolute;left:2727px;top:372.7px;height:4px;line-height:4px;font-family:'Liberation Mono',monospace;font-size:3.34px;font-weight:bold;white-space:pre;">        <span style="color:#6a9955"># save the user registers in TRAPFRAME</span></div>
<div style="position:absolute;left:2727px;top:376.7px;height:4px;line-height:4px;font-family:'Liberation Mono',monospace;font-size:3.34px;font-weight:bold;white-space:pre;">        <span style="color:#dcdcaa">sd</span> <span style="color:#9cdcfe">ra</span><span style="color:#cccccc">, </span><span style="color:#b5cea8">40</span><span style="color:#9a9a9a">(</span><span style="color:#9cdcfe">a0</span><span style="color:#9a9a9a">)</span></div>
<div style="position:absolute;left:2727px;top:380.7px;height:4px;line-height:4px;font-family:'Liberation Mono',monospace;font-size:3.34px;font-weight:bold;white-space:pre;">        <span style="color:#dcdcaa">sd</span> <span style="color:#9cdcfe">sp</span><span style="color:#cccccc">, </span><span style="color:#b5cea8">48</span><span style="color:#9a9a9a">(</span><span style="color:#9cdcfe">a0</span><span style="color:#9a9a9a">)</span></div>
<div style="position:absolute;left:2727px;top:384.7px;height:4px;line-height:4px;font-family:'Liberation Mono',monospace;font-size:3.34px;font-weight:bold;white-space:pre;">        <span style="color:#dcdcaa">sd</span> <span style="color:#9cdcfe">gp</span><span style="color:#cccccc">, </span><span style="color:#b5cea8">56</span><span style="color:#9a9a9a">(</span><span style="color:#9cdcfe">a0</span><span style="color:#9a9a9a">)</span></div>
<div style="position:absolute;left:2727px;top:388.7px;height:4px;line-height:4px;font-family:'Liberation Mono',monospace;font-size:3.34px;font-weight:bold;white-space:pre;">        <span style="color:#dcdcaa">sd</span> <span style="color:#9cdcfe">tp</span><span style="color:#cccccc">, </span><span style="color:#b5cea8">64</span><span style="color:#9a9a9a">(</span><span style="color:#9cdcfe">a0</span><span style="color:#9a9a9a">)</span></div>
<div style="position:absolute;left:2727px;top:392.7px;height:4px;line-height:4px;font-family:'Liberation Mono',monospace;font-size:3.34px;font-weight:bold;white-space:pre;">        <span style="color:#dcdcaa">sd</span> <span style="color:#9cdcfe">t0</span><span style="color:#cccccc">, </span><span style="color:#b5cea8">72</span><span style="color:#9a9a9a">(</span><span style="color:#9cdcfe">a0</span><span style="color:#9a9a9a">)</span></div>
<div style="position:absolute;left:2727px;top:396.7px;height:4px;line-height:4px;font-family:'Liberation Mono',monospace;font-size:3.34px;font-weight:bold;white-space:pre;">        <span style="color:#dcdcaa">sd</span> <span style="color:#9cdcfe">t1</span><span style="color:#cccccc">, </span><span style="color:#b5cea8">80</span><span style="color:#9a9a9a">(</span><span style="color:#9cdcfe">a0</span><span style="color:#9a9a9a">)</span></div>
<div style="position:absolute;left:2727px;top:400.7px;height:4px;line-height:4px;font-family:'Liberation Mono',monospace;font-size:3.34px;font-weight:bold;white-space:pre;">        <span style="color:#dcdcaa">sd</span> <span style="color:#9cdcfe">t2</span><span style="color:#cccccc">, </span><span style="color:#b5cea8">88</span><span style="color:#9a9a9a">(</span><span style="color:#9cdcfe">a0</span><span style="color:#9a9a9a">)</span></div>
<div style="position:absolute;left:2727px;top:404.7px;height:4px;line-height:4px;font-family:'Liberation Mono',monospace;font-size:3.34px;font-weight:bold;white-space:pre;">        <span style="color:#dcdcaa">sd</span> <span style="color:#9cdcfe">s0</span><span style="color:#cccccc">, </span><span style="color:#b5cea8">96</span><span style="color:#9a9a9a">(</span><span style="color:#9cdcfe">a0</span><span style="color:#9a9a9a">)</span></div>
<div style="position:absolute;left:2727px;top:408.7px;height:4px;line-height:4px;font-family:'Liberation Mono',monospace;font-size:3.34px;font-weight:bold;white-space:pre;">        <span style="color:#dcdcaa">sd</span> <span style="color:#9cdcfe">s1</span><span style="color:#cccccc">, </span><span style="color:#b5cea8">104</span><span style="color:#9a9a9a">(</span><span style="color:#9cdcfe">a0</span><span style="color:#9a9a9a">)</span></div>
<div style="position:absolute;left:2727px;top:412.7px;height:4px;line-height:4px;font-family:'Liberation Mono',monospace;font-size:3.34px;font-weight:bold;white-space:pre;">        <span style="color:#dcdcaa">sd</span> <span style="color:#9cdcfe">a1</span><span style="color:#cccccc">, </span><span style="color:#b5cea8">120</span><span style="color:#9a9a9a">(</span><span style="color:#9cdcfe">a0</span><span style="color:#9a9a9a">)</span></div>
<div style="position:absolute;left:2727px;top:416.7px;height:4px;line-height:4px;font-family:'Liberation Mono',monospace;font-size:3.34px;font-weight:bold;white-space:pre;">        <span style="color:#dcdcaa">sd</span> <span style="color:#9cdcfe">a2</span><span style="color:#cccccc">, </span><span style="color:#b5cea8">128</span><span style="color:#9a9a9a">(</span><span style="color:#9cdcfe">a0</span><span style="color:#9a9a9a">)</span></div>
<div style="position:absolute;left:2727px;top:420.7px;height:4px;line-height:4px;font-family:'Liberation Mono',monospace;font-size:3.34px;font-weight:bold;white-space:pre;">        <span style="color:#dcdcaa">sd</span> <span style="color:#9cdcfe">a3</span><span style="color:#cccccc">, </span><span style="color:#b5cea8">136</span><span style="color:#9a9a9a">(</span><span style="color:#9cdcfe">a0</span><span style="color:#9a9a9a">)</span></div>
<div style="position:absolute;left:2727px;top:424.7px;height:4px;line-height:4px;font-family:'Liberation Mono',monospace;font-size:3.34px;font-weight:bold;white-space:pre;">        <span style="color:#dcdcaa">sd</span> <span style="color:#9cdcfe">a4</span><span style="color:#cccccc">, </span><span style="color:#b5cea8">144</span><span style="color:#9a9a9a">(</span><span style="color:#9cdcfe">a0</span><span style="color:#9a9a9a">)</span></div>
<div style="position:absolute;left:2727px;top:428.7px;height:4px;line-height:4px;font-family:'Liberation Mono',monospace;font-size:3.34px;font-weight:bold;white-space:pre;">        <span style="color:#dcdcaa">sd</span> <span style="color:#9cdcfe">a5</span><span style="color:#cccccc">, </span><span style="color:#b5cea8">152</span><span style="color:#9a9a9a">(</span><span style="color:#9cdcfe">a0</span><span style="color:#9a9a9a">)</span></div>
<div style="position:absolute;left:2727px;top:432.7px;height:4px;line-height:4px;font-family:'Liberation Mono',monospace;font-size:3.34px;font-weight:bold;white-space:pre;">        <span style="color:#dcdcaa">sd</span> <span style="color:#9cdcfe">a6</span><span style="color:#cccccc">, </span><span style="color:#b5cea8">160</span><span style="color:#9a9a9a">(</span><span style="color:#9cdcfe">a0</span><span style="color:#9a9a9a">)</span></div>
<div style="position:absolute;left:2727px;top:436.7px;height:4px;line-height:4px;font-family:'Liberation Mono',monospace;font-size:3.34px;font-weight:bold;white-space:pre;">        <span style="color:#dcdcaa">sd</span> <span style="color:#9cdcfe">a7</span><span style="color:#cccccc">, </span><span style="color:#b5cea8">168</span><span style="color:#9a9a9a">(</span><span style="color:#9cdcfe">a0</span><span style="color:#9a9a9a">)</span></div>
<div style="position:absolute;left:2727px;top:440.7px;height:4px;line-height:4px;font-family:'Liberation Mono',monospace;font-size:3.34px;font-weight:bold;white-space:pre;">        <span style="color:#dcdcaa">sd</span> <span style="color:#9cdcfe">s2</span><span style="color:#cccccc">, </span><span style="color:#b5cea8">176</span><span style="color:#9a9a9a">(</span><span style="color:#9cdcfe">a0</span><span style="color:#9a9a9a">)</span></div>
<div style="position:absolute;left:2727px;top:444.7px;height:4px;line-height:4px;font-family:'Liberation Mono',monospace;font-size:3.34px;font-weight:bold;white-space:pre;">        <span style="color:#dcdcaa">sd</span> <span style="color:#9cdcfe">s3</span><span style="color:#cccccc">, </span><span style="color:#b5cea8">184</span><span style="color:#9a9a9a">(</span><span style="color:#9cdcfe">a0</span><span style="color:#9a9a9a">)</span></div>
<div style="position:absolute;left:2727px;top:448.7px;height:4px;line-height:4px;font-family:'Liberation Mono',monospace;font-size:3.34px;font-weight:bold;white-space:pre;">        <span style="color:#dcdcaa">sd</span> <span style="color:#9cdcfe">s4</span><span style="color:#cccccc">, </span><span style="color:#b5cea8">192</span><span style="color:#9a9a9a">(</span><span style="color:#9cdcfe">a0</span><span style="color:#9a9a9a">)</span></div>
<div style="position:absolute;left:2727px;top:452.7px;height:4px;line-height:4px;font-family:'Liberation Mono',monospace;font-size:3.34px;font-weight:bold;white-space:pre;">        <span style="color:#dcdcaa">sd</span> <span style="color:#9cdcfe">s5</span><span style="color:#cccccc">, </span><span style="color:#b5cea8">200</span><span style="color:#9a9a9a">(</span><span style="color:#9cdcfe">a0</span><span style="color:#9a9a9a">)</span></div>
<div style="position:absolute;left:2727px;top:456.7px;height:4px;line-height:4px;font-family:'Liberation Mono',monospace;font-size:3.34px;font-weight:bold;white-space:pre;">        <span style="color:#dcdcaa">sd</span> <span style="color:#9cdcfe">s6</span><span style="color:#cccccc">, </span><span style="color:#b5cea8">208</span><span style="color:#9a9a9a">(</span><span style="color:#9cdcfe">a0</span><span style="color:#9a9a9a">)</span></div>
<div style="position:absolute;left:2727px;top:460.7px;height:4px;line-height:4px;font-family:'Liberation Mono',monospace;font-size:3.34px;font-weight:bold;white-space:pre;">        <span style="color:#dcdcaa">sd</span> <span style="color:#9cdcfe">s7</span><span style="color:#cccccc">, </span><span style="color:#b5cea8">216</span><span style="color:#9a9a9a">(</span><span style="color:#9cdcfe">a0</span><span style="color:#9a9a9a">)</span></div>
<div style="position:absolute;left:2727px;top:464.7px;height:4px;line-height:4px;font-family:'Liberation Mono',monospace;font-size:3.34px;font-weight:bold;white-space:pre;">        <span style="color:#dcdcaa">sd</span> <span style="color:#9cdcfe">s8</span><span style="color:#cccccc">, </span><span style="color:#b5cea8">224</span><span style="color:#9a9a9a">(</span><span style="color:#9cdcfe">a0</span><span style="color:#9a9a9a">)</span></div>
<div style="position:absolute;left:2727px;top:468.7px;height:4px;line-height:4px;font-family:'Liberation Mono',monospace;font-size:3.34px;font-weight:bold;white-space:pre;">        <span style="color:#dcdcaa">sd</span> <span style="color:#9cdcfe">s9</span><span style="color:#cccccc">, </span><span style="color:#b5cea8">232</span><span style="color:#9a9a9a">(</span><span style="color:#9cdcfe">a0</span><span style="color:#9a9a9a">)</span></div>
<div style="position:absolute;left:2727px;top:472.7px;height:4px;line-height:4px;font-family:'Liberation Mono',monospace;font-size:3.34px;font-weight:bold;white-space:pre;">        <span style="color:#dcdcaa">sd</span> <span style="color:#9cdcfe">s10</span><span style="color:#cccccc">, </span><span style="color:#b5cea8">240</span><span style="color:#9a9a9a">(</span><span style="color:#9cdcfe">a0</span><span style="color:#9a9a9a">)</span></div>
<div style="position:absolute;left:2727px;top:476.7px;height:4px;line-height:4px;font-family:'Liberation Mono',monospace;font-size:3.34px;font-weight:bold;white-space:pre;">        <span style="color:#dcdcaa">sd</span> <span style="color:#9cdcfe">s11</span><span style="color:#cccccc">, </span><span style="color:#b5cea8">248</span><span style="color:#9a9a9a">(</span><span style="color:#9cdcfe">a0</span><span style="color:#9a9a9a">)</span></div>
<div style="position:absolute;left:2727px;top:480.7px;height:4px;line-height:4px;font-family:'Liberation Mono',monospace;font-size:3.34px;font-weight:bold;white-space:pre;">        <span style="color:#dcdcaa">sd</span> <span style="color:#9cdcfe">t3</span><span style="color:#cccccc">, </span><span style="color:#b5cea8">256</span><span style="color:#9a9a9a">(</span><span style="color:#9cdcfe">a0</span><span style="color:#9a9a9a">)</span></div>
<div style="position:absolute;left:2727px;top:484.7px;height:4px;line-height:4px;font-family:'Liberation Mono',monospace;font-size:3.34px;font-weight:bold;white-space:pre;">        <span style="color:#dcdcaa">sd</span> <span style="color:#9cdcfe">t4</span><span style="color:#cccccc">, </span><span style="color:#b5cea8">264</span><span style="color:#9a9a9a">(</span><span style="color:#9cdcfe">a0</span><span style="color:#9a9a9a">)</span></div>
<div style="position:absolute;left:2727px;top:488.7px;height:4px;line-height:4px;font-family:'Liberation Mono',monospace;font-size:3.34px;font-weight:bold;white-space:pre;">        <span style="color:#dcdcaa">sd</span> <span style="color:#9cdcfe">t5</span><span style="color:#cccccc">, </span><span style="color:#b5cea8">272</span><span style="color:#9a9a9a">(</span><span style="color:#9cdcfe">a0</span><span style="color:#9a9a9a">)</span></div>
<div style="position:absolute;left:2727px;top:492.7px;height:4px;line-height:4px;font-family:'Liberation Mono',monospace;font-size:3.34px;font-weight:bold;white-space:pre;">        <span style="color:#dcdcaa">sd</span> <span style="color:#9cdcfe">t6</span><span style="color:#cccccc">, </span><span style="color:#b5cea8">280</span><span style="color:#9a9a9a">(</span><span style="color:#9cdcfe">a0</span><span style="color:#9a9a9a">)</span></div>
<div style="position:absolute;left:2727px;top:500.7px;height:4px;line-height:4px;font-family:'Liberation Mono',monospace;font-size:3.34px;font-weight:bold;white-space:pre;">        <span style="color:#6a9955"># save the user a0 in p-&gt;trapframe-&gt;a0</span></div>
<div style="position:absolute;left:2727px;top:504.7px;height:4px;line-height:4px;font-family:'Liberation Mono',monospace;font-size:3.34px;font-weight:bold;white-space:pre;">        <span style="color:#dcdcaa">csrr</span> <span style="color:#9cdcfe">t0</span><span style="color:#cccccc">, </span><span style="color:#9cdcfe">sscratch</span></div>
<div style="position:absolute;left:2727px;top:508.7px;height:4px;line-height:4px;font-family:'Liberation Mono',monospace;font-size:3.34px;font-weight:bold;white-space:pre;">        <span style="color:#dcdcaa">sd</span> <span style="color:#9cdcfe">t0</span><span style="color:#cccccc">, </span><span style="color:#b5cea8">112</span><span style="color:#9a9a9a">(</span><span style="color:#9cdcfe">a0</span><span style="color:#9a9a9a">)</span></div>
<div style="position:absolute;left:2727px;top:516.7px;height:4px;line-height:4px;font-family:'Liberation Mono',monospace;font-size:3.34px;font-weight:bold;white-space:pre;">        <span style="color:#6a9955"># initialize kernel stack pointer, from p-&gt;trapframe-&gt;kernel_sp</span></div>
<div style="position:absolute;left:2727px;top:520.7px;height:4px;line-height:4px;font-family:'Liberation Mono',monospace;font-size:3.34px;font-weight:bold;white-space:pre;">        <span style="color:#dcdcaa">ld</span> <span style="color:#9cdcfe">sp</span><span style="color:#cccccc">, </span><span style="color:#b5cea8">8</span><span style="color:#9a9a9a">(</span><span style="color:#9cdcfe">a0</span><span style="color:#9a9a9a">)</span></div>
<div style="position:absolute;left:2727px;top:528.7px;height:4px;line-height:4px;font-family:'Liberation Mono',monospace;font-size:3.34px;font-weight:bold;white-space:pre;">        <span style="color:#6a9955"># make tp hold the current hartid, from p-&gt;trapframe-&gt;kernel_hartid</span></div>
<div style="position:absolute;left:2727px;top:532.7px;height:4px;line-height:4px;font-family:'Liberation Mono',monospace;font-size:3.34px;font-weight:bold;white-space:pre;">        <span style="color:#dcdcaa">ld</span> <span style="color:#9cdcfe">tp</span><span style="color:#cccccc">, </span><span style="color:#b5cea8">32</span><span style="color:#9a9a9a">(</span><span style="color:#9cdcfe">a0</span><span style="color:#9a9a9a">)</span></div>
<div style="position:absolute;left:2727px;top:540.7px;height:4px;line-height:4px;font-family:'Liberation Mono',monospace;font-size:3.34px;font-weight:bold;white-space:pre;">        <span style="color:#6a9955"># load the address of usertrap(), from p-&gt;trapframe-&gt;kernel_trap</span></div>
<div style="position:absolute;left:2727px;top:544.7px;height:4px;line-height:4px;font-family:'Liberation Mono',monospace;font-size:3.34px;font-weight:bold;white-space:pre;">        <span style="color:#dcdcaa">ld</span> <span style="color:#9cdcfe">t0</span><span style="color:#cccccc">, </span><span style="color:#b5cea8">16</span><span style="color:#9a9a9a">(</span><span style="color:#9cdcfe">a0</span><span style="color:#9a9a9a">)</span></div>
<div style="position:absolute;left:2727px;top:552.7px;height:4px;line-height:4px;font-family:'Liberation Mono',monospace;font-size:3.34px;font-weight:bold;white-space:pre;">        <span style="color:#6a9955"># fetch the kernel page table address, from p-&gt;trapframe-&gt;kernel_satp.</span></div>
<div style="position:absolute;left:2727px;top:556.7px;height:4px;line-height:4px;font-family:'Liberation Mono',monospace;font-size:3.34px;font-weight:bold;white-space:pre;">        <span style="color:#dcdcaa">ld</span> <span style="color:#9cdcfe">t1</span><span style="color:#cccccc">, </span><span style="color:#b5cea8">0</span><span style="color:#9a9a9a">(</span><span style="color:#9cdcfe">a0</span><span style="color:#9a9a9a">)</span></div>
<div style="position:absolute;left:2727px;top:564.7px;height:4px;line-height:4px;font-family:'Liberation Mono',monospace;font-size:3.34px;font-weight:bold;white-space:pre;">        <span style="color:#6a9955"># wait for any previous memory operations to complete, so that</span></div>
<div style="position:absolute;left:2727px;top:568.7px;height:4px;line-height:4px;font-family:'Liberation Mono',monospace;font-size:3.34px;font-weight:bold;white-space:pre;">        <span style="color:#6a9955"># they use the user page table.</span></div>
<div style="position:absolute;left:2727px;top:572.7px;height:4px;line-height:4px;font-family:'Liberation Mono',monospace;font-size:3.34px;font-weight:bold;white-space:pre;">        <span style="color:#dcdcaa">sfence.vma</span> <span style="color:#9cdcfe">zero</span><span style="color:#cccccc">, </span><span style="color:#9cdcfe">zero</span></div>
<div style="position:absolute;left:2727px;top:580.7px;height:4px;line-height:4px;font-family:'Liberation Mono',monospace;font-size:3.34px;font-weight:bold;white-space:pre;">        <span style="color:#6a9955"># install the kernel page table.</span></div>
<div style="position:absolute;left:2727px;top:584.7px;height:4px;line-height:4px;font-family:'Liberation Mono',monospace;font-size:3.34px;font-weight:bold;white-space:pre;">        <span style="color:#dcdcaa">csrw</span> <span style="color:#9cdcfe">satp</span><span style="color:#cccccc">, </span><span style="color:#9cdcfe">t1</span></div>
<div style="position:absolute;left:2727px;top:592.7px;height:4px;line-height:4px;font-family:'Liberation Mono',monospace;font-size:3.34px;font-weight:bold;white-space:pre;">        <span style="color:#6a9955"># flush now-stale user entries from the TLB.</span></div>
<div style="position:absolute;left:2727px;top:596.7px;height:4px;line-height:4px;font-family:'Liberation Mono',monospace;font-size:3.34px;font-weight:bold;white-space:pre;">        <span style="color:#dcdcaa">sfence.vma</span> <span style="color:#9cdcfe">zero</span><span style="color:#cccccc">, </span><span style="color:#9cdcfe">zero</span></div>
<div style="position:absolute;left:2727px;top:604.7px;height:4px;line-height:4px;font-family:'Liberation Mono',monospace;font-size:3.34px;font-weight:bold;white-space:pre;">        <span style="color:#6a9955"># jump to usertrap(), which does not return</span></div>
<div style="position:absolute;left:2727px;top:608.7px;height:4px;line-height:4px;font-family:'Liberation Mono',monospace;font-size:3.34px;font-weight:bold;white-space:pre;">        <span style="color:#dcdcaa">jr</span> <span style="color:#9cdcfe">t0</span></div>
<div style="position:absolute;left:2727px;top:616.7px;height:4px;line-height:4px;font-family:'Liberation Mono',monospace;font-size:3.34px;font-weight:bold;white-space:pre;"><span style="color:#569cd6">.globl</span><span style="color:#cccccc"> userret</span></div>
<div style="position:absolute;left:2727px;top:620.7px;height:4px;line-height:4px;font-family:'Liberation Mono',monospace;font-size:3.34px;font-weight:bold;white-space:pre;"><span style="color:#dcdcaa">userret:</span></div>
<div style="position:absolute;left:2727px;top:624.7px;height:4px;line-height:4px;font-family:'Liberation Mono',monospace;font-size:3.34px;font-weight:bold;white-space:pre;">        <span style="color:#6a9955"># userret(pagetable)</span></div>
<div style="position:absolute;left:2727px;top:628.7px;height:4px;line-height:4px;font-family:'Liberation Mono',monospace;font-size:3.34px;font-weight:bold;white-space:pre;">        <span style="color:#6a9955"># called by usertrapret() in trap.c to</span></div>
<div style="position:absolute;left:2727px;top:632.7px;height:4px;line-height:4px;font-family:'Liberation Mono',monospace;font-size:3.34px;font-weight:bold;white-space:pre;">        <span style="color:#6a9955"># switch from kernel to user.</span></div>
<div style="position:absolute;left:2727px;top:636.7px;height:4px;line-height:4px;font-family:'Liberation Mono',monospace;font-size:3.34px;font-weight:bold;white-space:pre;">        <span style="color:#6a9955"># a0: user page table, for satp.</span></div>
<div style="position:absolute;left:2727px;top:644.7px;height:4px;line-height:4px;font-family:'Liberation Mono',monospace;font-size:3.34px;font-weight:bold;white-space:pre;">        <span style="color:#6a9955"># switch to the user page table.</span></div>
<div style="position:absolute;left:2727px;top:648.7px;height:4px;line-height:4px;font-family:'Liberation Mono',monospace;font-size:3.34px;font-weight:bold;white-space:pre;">        <span style="color:#dcdcaa">sfence.vma</span> <span style="color:#9cdcfe">zero</span><span style="color:#cccccc">, </span><span style="color:#9cdcfe">zero</span></div>
<div style="position:absolute;left:2727px;top:652.7px;height:4px;line-height:4px;font-family:'Liberation Mono',monospace;font-size:3.34px;font-weight:bold;white-space:pre;">        <span style="color:#dcdcaa">csrw</span> <span style="color:#9cdcfe">satp</span><span style="color:#cccccc">, </span><span style="color:#9cdcfe">a0</span></div>
<div style="position:absolute;left:2727px;top:656.7px;height:4px;line-height:4px;font-family:'Liberation Mono',monospace;font-size:3.34px;font-weight:bold;white-space:pre;">        <span style="color:#dcdcaa">sfence.vma</span> <span style="color:#9cdcfe">zero</span><span style="color:#cccccc">, </span><span style="color:#9cdcfe">zero</span></div>
<div style="position:absolute;left:2727px;top:664.7px;height:4px;line-height:4px;font-family:'Liberation Mono',monospace;font-size:3.34px;font-weight:bold;white-space:pre;">        <span style="color:#dcdcaa">li</span> <span style="color:#9cdcfe">a0</span><span style="color:#cccccc">, </span><span style="color:#cccccc">TRAPFRAME</span></div>
<div style="position:absolute;left:2727px;top:672.7px;height:4px;line-height:4px;font-family:'Liberation Mono',monospace;font-size:3.34px;font-weight:bold;white-space:pre;">        <span style="color:#6a9955"># restore all but a0 from TRAPFRAME</span></div>
<div style="position:absolute;left:2727px;top:676.7px;height:4px;line-height:4px;font-family:'Liberation Mono',monospace;font-size:3.34px;font-weight:bold;white-space:pre;">        <span style="color:#dcdcaa">ld</span> <span style="color:#9cdcfe">ra</span><span style="color:#cccccc">, </span><span style="color:#b5cea8">40</span><span style="color:#9a9a9a">(</span><span style="color:#9cdcfe">a0</span><span style="color:#9a9a9a">)</span></div>
<div style="position:absolute;left:2727px;top:680.7px;height:4px;line-height:4px;font-family:'Liberation Mono',monospace;font-size:3.34px;font-weight:bold;white-space:pre;">        <span style="color:#dcdcaa">ld</span> <span style="color:#9cdcfe">sp</span><span style="color:#cccccc">, </span><span style="color:#b5cea8">48</span><span style="color:#9a9a9a">(</span><span style="color:#9cdcfe">a0</span><span style="color:#9a9a9a">)</span></div>
<div style="position:absolute;left:2727px;top:684.7px;height:4px;line-height:4px;font-family:'Liberation Mono',monospace;font-size:3.34px;font-weight:bold;white-space:pre;">        <span style="color:#dcdcaa">ld</span> <span style="color:#9cdcfe">gp</span><span style="color:#cccccc">, </span><span style="color:#b5cea8">56</span><span style="color:#9a9a9a">(</span><span style="color:#9cdcfe">a0</span><span style="color:#9a9a9a">)</span></div>
<div style="position:absolute;left:2727px;top:688.7px;height:4px;line-height:4px;font-family:'Liberation Mono',monospace;font-size:3.34px;font-weight:bold;white-space:pre;">        <span style="color:#dcdcaa">ld</span> <span style="color:#9cdcfe">tp</span><span style="color:#cccccc">, </span><span style="color:#b5cea8">64</span><span style="color:#9a9a9a">(</span><span style="color:#9cdcfe">a0</span><span style="color:#9a9a9a">)</span></div>
<div style="position:absolute;left:2727px;top:692.7px;height:4px;line-height:4px;font-family:'Liberation Mono',monospace;font-size:3.34px;font-weight:bold;white-space:pre;">        <span style="color:#dcdcaa">ld</span> <span style="color:#9cdcfe">t0</span><span style="color:#cccccc">, </span><span style="color:#b5cea8">72</span><span style="color:#9a9a9a">(</span><span style="color:#9cdcfe">a0</span><span style="color:#9a9a9a">)</span></div>
<div style="position:absolute;left:2727px;top:696.7px;height:4px;line-height:4px;font-family:'Liberation Mono',monospace;font-size:3.34px;font-weight:bold;white-space:pre;">        <span style="color:#dcdcaa">ld</span> <span style="color:#9cdcfe">t1</span><span style="color:#cccccc">, </span><span style="color:#b5cea8">80</span><span style="color:#9a9a9a">(</span><span style="color:#9cdcfe">a0</span><span style="color:#9a9a9a">)</span></div>
<div style="position:absolute;left:2727px;top:700.7px;height:4px;line-height:4px;font-family:'Liberation Mono',monospace;font-size:3.34px;font-weight:bold;white-space:pre;">        <span style="color:#dcdcaa">ld</span> <span style="color:#9cdcfe">t2</span><span style="color:#cccccc">, </span><span style="color:#b5cea8">88</span><span style="color:#9a9a9a">(</span><span style="color:#9cdcfe">a0</span><span style="color:#9a9a9a">)</span></div>
<div style="position:absolute;left:2727px;top:704.7px;height:4px;line-height:4px;font-family:'Liberation Mono',monospace;font-size:3.34px;font-weight:bold;white-space:pre;">        <span style="color:#dcdcaa">ld</span> <span style="color:#9cdcfe">s0</span><span style="color:#cccccc">, </span><span style="color:#b5cea8">96</span><span style="color:#9a9a9a">(</span><span style="color:#9cdcfe">a0</span><span style="color:#9a9a9a">)</span></div>
<div style="position:absolute;left:2727px;top:708.7px;height:4px;line-height:4px;font-family:'Liberation Mono',monospace;font-size:3.34px;font-weight:bold;white-space:pre;">        <span style="color:#dcdcaa">ld</span> <span style="color:#9cdcfe">s1</span><span style="color:#cccccc">, </span><span style="color:#b5cea8">104</span><span style="color:#9a9a9a">(</span><span style="color:#9cdcfe">a0</span><span style="color:#9a9a9a">)</span></div>
<div style="position:absolute;left:2727px;top:712.7px;height:4px;line-height:4px;font-family:'Liberation Mono',monospace;font-size:3.34px;font-weight:bold;white-space:pre;">        <span style="color:#dcdcaa">ld</span> <span style="color:#9cdcfe">a1</span><span style="color:#cccccc">, </span><span style="color:#b5cea8">120</span><span style="color:#9a9a9a">(</span><span style="color:#9cdcfe">a0</span><span style="color:#9a9a9a">)</span></div>
<div style="position:absolute;left:2727px;top:716.7px;height:4px;line-height:4px;font-family:'Liberation Mono',monospace;font-size:3.34px;font-weight:bold;white-space:pre;">        <span style="color:#dcdcaa">ld</span> <span style="color:#9cdcfe">a2</span><span style="color:#cccccc">, </span><span style="color:#b5cea8">128</span><span style="color:#9a9a9a">(</span><span style="color:#9cdcfe">a0</span><span style="color:#9a9a9a">)</span></div>
<div style="position:absolute;left:2727px;top:720.7px;height:4px;line-height:4px;font-family:'Liberation Mono',monospace;font-size:3.34px;font-weight:bold;white-space:pre;">        <span style="color:#dcdcaa">ld</span> <span style="color:#9cdcfe">a3</span><span style="color:#cccccc">, </span><span style="color:#b5cea8">136</span><span style="color:#9a9a9a">(</span><span style="color:#9cdcfe">a0</span><span style="color:#9a9a9a">)</span></div>
<div style="position:absolute;left:2727px;top:724.7px;height:4px;line-height:4px;font-family:'Liberation Mono',monospace;font-size:3.34px;font-weight:bold;white-space:pre;">        <span style="color:#dcdcaa">ld</span> <span style="color:#9cdcfe">a4</span><span style="color:#cccccc">, </span><span style="color:#b5cea8">144</span><span style="color:#9a9a9a">(</span><span style="color:#9cdcfe">a0</span><span style="color:#9a9a9a">)</span></div>
<div style="position:absolute;left:2727px;top:728.7px;height:4px;line-height:4px;font-family:'Liberation Mono',monospace;font-size:3.34px;font-weight:bold;white-space:pre;">        <span style="color:#dcdcaa">ld</span> <span style="color:#9cdcfe">a5</span><span style="color:#cccccc">, </span><span style="color:#b5cea8">152</span><span style="color:#9a9a9a">(</span><span style="color:#9cdcfe">a0</span><span style="color:#9a9a9a">)</span></div>
<div style="position:absolute;left:2727px;top:732.7px;height:4px;line-height:4px;font-family:'Liberation Mono',monospace;font-size:3.34px;font-weight:bold;white-space:pre;">        <span style="color:#dcdcaa">ld</span> <span style="color:#9cdcfe">a6</span><span style="color:#cccccc">, </span><span style="color:#b5cea8">160</span><span style="color:#9a9a9a">(</span><span style="color:#9cdcfe">a0</span><span style="color:#9a9a9a">)</span></div>
<div style="position:absolute;left:2727px;top:736.7px;height:4px;line-height:4px;font-family:'Liberation Mono',monospace;font-size:3.34px;font-weight:bold;white-space:pre;">        <span style="color:#dcdcaa">ld</span> <span style="color:#9cdcfe">a7</span><span style="color:#cccccc">, </span><span style="color:#b5cea8">168</span><span style="color:#9a9a9a">(</span><span style="color:#9cdcfe">a0</span><span style="color:#9a9a9a">)</span></div>
<div style="position:absolute;left:2727px;top:740.7px;height:4px;line-height:4px;font-family:'Liberation Mono',monospace;font-size:3.34px;font-weight:bold;white-space:pre;">        <span style="color:#dcdcaa">ld</span> <span style="color:#9cdcfe">s2</span><span style="color:#cccccc">, </span><span style="color:#b5cea8">176</span><span style="color:#9a9a9a">(</span><span style="color:#9cdcfe">a0</span><span style="color:#9a9a9a">)</span></div>
<div style="position:absolute;left:2727px;top:744.7px;height:4px;line-height:4px;font-family:'Liberation Mono',monospace;font-size:3.34px;font-weight:bold;white-space:pre;">        <span style="color:#dcdcaa">ld</span> <span style="color:#9cdcfe">s3</span><span style="color:#cccccc">, </span><span style="color:#b5cea8">184</span><span style="color:#9a9a9a">(</span><span style="color:#9cdcfe">a0</span><span style="color:#9a9a9a">)</span></div>
<div style="position:absolute;left:2727px;top:748.7px;height:4px;line-height:4px;font-family:'Liberation Mono',monospace;font-size:3.34px;font-weight:bold;white-space:pre;">        <span style="color:#dcdcaa">ld</span> <span style="color:#9cdcfe">s4</span><span style="color:#cccccc">, </span><span style="color:#b5cea8">192</span><span style="color:#9a9a9a">(</span><span style="color:#9cdcfe">a0</span><span style="color:#9a9a9a">)</span></div>
<div style="position:absolute;left:2727px;top:752.7px;height:4px;line-height:4px;font-family:'Liberation Mono',monospace;font-size:3.34px;font-weight:bold;white-space:pre;">        <span style="color:#dcdcaa">ld</span> <span style="color:#9cdcfe">s5</span><span style="color:#cccccc">, </span><span style="color:#b5cea8">200</span><span style="color:#9a9a9a">(</span><span style="color:#9cdcfe">a0</span><span style="color:#9a9a9a">)</span></div>
<div style="position:absolute;left:2727px;top:756.7px;height:4px;line-height:4px;font-family:'Liberation Mono',monospace;font-size:3.34px;font-weight:bold;white-space:pre;">        <span style="color:#dcdcaa">ld</span> <span style="color:#9cdcfe">s6</span><span style="color:#cccccc">, </span><span style="color:#b5cea8">208</span><span style="color:#9a9a9a">(</span><span style="color:#9cdcfe">a0</span><span style="color:#9a9a9a">)</span></div>
<div style="position:absolute;left:2727px;top:760.7px;height:4px;line-height:4px;font-family:'Liberation Mono',monospace;font-size:3.34px;font-weight:bold;white-space:pre;">        <span style="color:#dcdcaa">ld</span> <span style="color:#9cdcfe">s7</span><span style="color:#cccccc">, </span><span style="color:#b5cea8">216</span><span style="color:#9a9a9a">(</span><span style="color:#9cdcfe">a0</span><span style="color:#9a9a9a">)</span></div>
<div style="position:absolute;left:2727px;top:764.7px;height:4px;line-height:4px;font-family:'Liberation Mono',monospace;font-size:3.34px;font-weight:bold;white-space:pre;">        <span style="color:#dcdcaa">ld</span> <span style="color:#9cdcfe">s8</span><span style="color:#cccccc">, </span><span style="color:#b5cea8">224</span><span style="color:#9a9a9a">(</span><span style="color:#9cdcfe">a0</span><span style="color:#9a9a9a">)</span></div>
<div style="position:absolute;left:2727px;top:768.7px;height:4px;line-height:4px;font-family:'Liberation Mono',monospace;font-size:3.34px;font-weight:bold;white-space:pre;">        <span style="color:#dcdcaa">ld</span> <span style="color:#9cdcfe">s9</span><span style="color:#cccccc">, </span><span style="color:#b5cea8">232</span><span style="color:#9a9a9a">(</span><span style="color:#9cdcfe">a0</span><span style="color:#9a9a9a">)</span></div>
<div style="position:absolute;left:2727px;top:772.7px;height:4px;line-height:4px;font-family:'Liberation Mono',monospace;font-size:3.34px;font-weight:bold;white-space:pre;">        <span style="color:#dcdcaa">ld</span> <span style="color:#9cdcfe">s10</span><span style="color:#cccccc">, </span><span style="color:#b5cea8">240</span><span style="color:#9a9a9a">(</span><span style="color:#9cdcfe">a0</span><span style="color:#9a9a9a">)</span></div>
<div style="position:absolute;left:2727px;top:776.7px;height:4px;line-height:4px;font-family:'Liberation Mono',monospace;font-size:3.34px;font-weight:bold;white-space:pre;">        <span style="color:#dcdcaa">ld</span> <span style="color:#9cdcfe">s11</span><span style="color:#cccccc">, </span><span style="color:#b5cea8">248</span><span style="color:#9a9a9a">(</span><span style="color:#9cdcfe">a0</span><span style="color:#9a9a9a">)</span></div>
<div style="position:absolute;left:2727px;top:780.7px;height:4px;line-height:4px;font-family:'Liberation Mono',monospace;font-size:3.34px;font-weight:bold;white-space:pre;">        <span style="color:#dcdcaa">ld</span> <span style="color:#9cdcfe">t3</span><span style="color:#cccccc">, </span><span style="color:#b5cea8">256</span><span style="color:#9a9a9a">(</span><span style="color:#9cdcfe">a0</span><span style="color:#9a9a9a">)</span></div>
<div style="position:absolute;left:2727px;top:784.7px;height:4px;line-height:4px;font-family:'Liberation Mono',monospace;font-size:3.34px;font-weight:bold;white-space:pre;">        <span style="color:#dcdcaa">ld</span> <span style="color:#9cdcfe">t4</span><span style="color:#cccccc">, </span><span style="color:#b5cea8">264</span><span style="color:#9a9a9a">(</span><span style="color:#9cdcfe">a0</span><span style="color:#9a9a9a">)</span></div>
<div style="position:absolute;left:2727px;top:788.7px;height:4px;line-height:4px;font-family:'Liberation Mono',monospace;font-size:3.34px;font-weight:bold;white-space:pre;">        <span style="color:#dcdcaa">ld</span> <span style="color:#9cdcfe">t5</span><span style="color:#cccccc">, </span><span style="color:#b5cea8">272</span><span style="color:#9a9a9a">(</span><span style="color:#9cdcfe">a0</span><span style="color:#9a9a9a">)</span></div>
<div style="position:absolute;left:2727px;top:792.7px;height:4px;line-height:4px;font-family:'Liberation Mono',monospace;font-size:3.34px;font-weight:bold;white-space:pre;">        <span style="color:#dcdcaa">ld</span> <span style="color:#9cdcfe">t6</span><span style="color:#cccccc">, </span><span style="color:#b5cea8">280</span><span style="color:#9a9a9a">(</span><span style="color:#9cdcfe">a0</span><span style="color:#9a9a9a">)</span></div>
<div style="position:absolute;left:2727px;top:800.7px;height:4px;line-height:4px;font-family:'Liberation Mono',monospace;font-size:3.34px;font-weight:bold;white-space:pre;">        <span style="color:#6a9955"># restore user a0</span></div>
<div style="position:absolute;left:2727px;top:804.7px;height:4px;line-height:4px;font-family:'Liberation Mono',monospace;font-size:3.34px;font-weight:bold;white-space:pre;">        <span style="color:#dcdcaa">ld</span> <span style="color:#9cdcfe">a0</span><span style="color:#cccccc">, </span><span style="color:#b5cea8">112</span><span style="color:#9a9a9a">(</span><span style="color:#9cdcfe">a0</span><span style="color:#9a9a9a">)</span></div>
<div style="position:absolute;left:2727px;top:812.7px;height:4px;line-height:4px;font-family:'Liberation Mono',monospace;font-size:3.34px;font-weight:bold;white-space:pre;">        <span style="color:#6a9955"># return to user mode and user pc.</span></div>
<div style="position:absolute;left:2727px;top:816.7px;height:4px;line-height:4px;font-family:'Liberation Mono',monospace;font-size:3.34px;font-weight:bold;white-space:pre;">        <span style="color:#6a9955"># usertrapret() set up sstatus and sepc.</span></div>
<div style="position:absolute;left:2727px;top:820.7px;height:4px;line-height:4px;font-family:'Liberation Mono',monospace;font-size:3.34px;font-weight:bold;white-space:pre;">        <span style="color:#dcdcaa">sret</span></div></div></div>
<div style="position:absolute;left:2846px;top:221px;width:1px;height:1430px;background:#151515;"></div>
<div style="position:absolute;left:2846px;top:221px;width:32px;height:1px;background:#151515;"></div>
<div style="position:absolute;left:2847px;top:898.5px;width:32px;height:244.5px;background:#434343;"></div>
<div style="position:absolute;left:2847px;top:987.5px;width:32px;height:3.5px;background:#9b9b9b;"></div>
<div style="position:absolute;left:1555px;top:221px;width:1164px;height:45.6px;background:#1f1f1f;"></div>
<div style="position:absolute;left:1559px;top:266.6px;width:1160px;height:7px;background:linear-gradient(to bottom, rgba(0,0,0,0.9), rgba(0,0,0,0));"></div>
<div class="ln" style="top:224.00px;color:#6e7681">22</div>
<div class="e" style="top:224.00px"><span style="color:#dcdcaa">uservec:</span></div>
<div style="position:absolute;left:2705px;top:221px;width:14px;height:1430px;background:linear-gradient(to right, rgba(0,0,0,0), rgba(0,0,0,0.45));"></div>
<div style="position:absolute;left:1718px;top:1622.5px;width:667px;height:28.5px;background:rgba(121,121,121,0.4);"></div>
<div style="position:absolute;left:1442px;top:1651px;width:1437px;height:3px;background:#2b2b2b;"></div>
<div style="position:absolute;left:1442px;top:1654px;width:1437px;height:41px;background:#181818;"></div>
<div style="position:absolute;left:1442px;top:1654px;width:333px;height:41px;background:#0078d4;"></div>
<svg style="position:absolute;left:1466px;top:1658px;" width="30" height="36" viewBox="0 0 30 36"><path d="M5 13.2 L14.2 22.3 L5 31.8 M25 4.7 L15.7 13.6 L25 22.7" stroke="#ffffff" stroke-width="2.3" fill="none"/></svg>
<div style="position:absolute;left:1505px;top:1663.40px;white-space:pre;color:#ffffff;font-family:'Liberation Sans', sans-serif;font-size:30px;font-weight:normal;line-height:30px;transform:scaleX(0.926);transform-origin:0 0;">WSL: Ubuntu-24.04</div>
<svg style="position:absolute;left:1792px;top:1656px;" width="36" height="40" viewBox="0 0 36 40"><g fill="none" stroke="#cccccc" stroke-width="2.4"><circle cx="10.5" cy="9.5" r="5.3"/><circle cx="26" cy="16.5" r="5.3"/><circle cx="10.5" cy="33" r="5.3"/><path d="M10.5 14.8 V27.7 M26 21.8 Q26 25 20 25 H15 Q10.5 25 10.5 28"/></g></svg>
<div style="position:absolute;left:1836px;top:1663.61px;white-space:pre;color:#cccccc;font-family:'Liberation Sans', sans-serif;font-size:30px;font-weight:normal;line-height:30px;transform:scaleX(0.95);transform-origin:0 0;">main*</div>
<svg style="position:absolute;left:1920px;top:1658px;" width="42" height="36" viewBox="0 0 42 36"><g fill="none" stroke="#cccccc" stroke-width="2.4"><path d="M8.5 19 A12 12 0 0 1 31 13"/><path d="M33.5 17 A12 12 0 0 1 11 23"/><path d="M27 12 L31.5 13.5 L34 9"/><path d="M15 24 L10.5 22.5 L8 27"/></g></svg>
<svg style="position:absolute;left:1996px;top:1659px;" width="36" height="36" viewBox="0 0 36 36"><g fill="none" stroke="#cccccc" stroke-width="2.4"><circle cx="17.5" cy="17.5" r="13.8"/><path d="M12 12 L23 23 M23 12 L12 23"/></g></svg>
<div style="position:absolute;left:2038px;top:1663.61px;white-space:pre;color:#cccccc;font-family:'Liberation Sans', sans-serif;font-size:30px;font-weight:normal;line-height:30px;transform:scaleX(0.9);transform-origin:0 0;">25</div>
<svg style="position:absolute;left:2076px;top:1659px;" width="36" height="34" viewBox="0 0 36 34"><g fill="none" stroke="#cccccc" stroke-width="2.4" stroke-linejoin="round"><path d="M18 4.5 L31.5 29.3 H4.5 Z"/></g><rect x="16.6" y="12.5" width="2.8" height="9" fill="#cccccc"/><rect x="16.6" y="23.5" width="2.8" height="3" fill="#cccccc"/></svg>
<div style="position:absolute;left:2117px;top:1663.61px;white-space:pre;color:#cccccc;font-family:'Liberation Sans', sans-serif;font-size:30px;font-weight:normal;line-height:30px;transform:scaleX(0.9);transform-origin:0 0;">0</div>
<svg style="position:absolute;left:2172px;top:1658px;" width="36" height="36" viewBox="0 0 36 36"><g fill="none" stroke="#cccccc" stroke-width="2.3"><path d="M8.5 5.5 Q3.5 11 8.5 17.5 M27.5 5.5 Q32.5 11 27.5 17.5 M12.5 8.5 Q10 11.5 12.5 14.5 M23.5 8.5 Q26 11.5 23.5 14.5"/><circle cx="18" cy="11.5" r="2"/><path d="M18 14 L11 32 M18 14 L25 32 M13.5 25 H22.5"/></g></svg>
<div style="position:absolute;left:2213px;top:1663.61px;white-space:pre;color:#cccccc;font-family:'Liberation Sans', sans-serif;font-size:30px;font-weight:normal;line-height:30px;transform:scaleX(0.9);transform-origin:0 0;">1</div>
<div style="position:absolute;left:2385px;top:1663.40px;white-space:pre;color:#cccccc;font-family:'Liberation Sans', sans-serif;font-size:30px;font-weight:normal;line-height:30px;transform:scaleX(0.905);transform-origin:0 0;">UTF-8</div>
<div style="position:absolute;left:2499px;top:1663.40px;white-space:pre;color:#cccccc;font-family:'Liberation Sans', sans-serif;font-size:30px;font-weight:normal;line-height:30px;transform:scaleX(0.78);transform-origin:0 0;">LF</div>
<div style="position:absolute;left:2569px;top:1664.64px;white-space:pre;color:#cccccc;font-family:'Liberation Sans', sans-serif;font-size:27px;font-weight:normal;line-height:27px;transform:scaleX(0.95);transform-origin:0 0;">{ }</div>
<div style="position:absolute;left:2613px;top:1663.40px;white-space:pre;color:#cccccc;font-family:'Liberation Sans', sans-serif;font-size:30px;font-weight:normal;line-height:30px;transform:scaleX(0.855);transform-origin:0 0;">RISC-V</div>
<svg style="position:absolute;left:2738px;top:1661.6px;" width="37" height="34" viewBox="0 0 37 34"><g transform="scale(0.895)">
<ellipse cx="19.55" cy="25" rx="19.55" ry="9.3" fill="#cccccc"/>
<rect x="3.75" y="10" width="31.75" height="15" fill="#cccccc"/>
<rect x="3.75" y="0.2" width="15.6" height="16.8" rx="6.5" fill="#cccccc"/>
<rect x="19.1" y="0.2" width="16.4" height="16.8" rx="6.5" fill="#cccccc"/>
<rect x="7.9" y="4.5" width="8.9" height="8.5" rx="2.8" fill="#181818"/>
<rect x="22.1" y="4.5" width="9" height="8.5" rx="2.8" fill="#181818"/>
<path d="M7.9 17.5 H18 L19.5 16.2 L21 17.5 H31.1 V27.2 Q19.5 32 7.9 27.2 Z" fill="#181818"/>
<rect x="13.4" y="19.5" width="4.1" height="7.5" rx="2" fill="#cccccc"/>
<rect x="21.6" y="19.5" width="4.3" height="7.5" rx="2" fill="#cccccc"/>
</g></svg>
<div style="position:absolute;left:2878px;top:0px;width:1px;height:1695px;background:#808080;"></div>
<svg style="position:absolute;left:2812px;top:1658px;" width="32" height="38" viewBox="0 0 32 38"><g fill="none" stroke="#cccccc" stroke-width="2.3" stroke-linejoin="round"><path d="M15.5 4 Q25 4 25 15 V24 L28.5 29 H2.5 L6 24 V15 Q6 4 15.5 4 Z"/><path d="M12 31 Q15.5 35 19 31"/></g></svg>
</body></html>
